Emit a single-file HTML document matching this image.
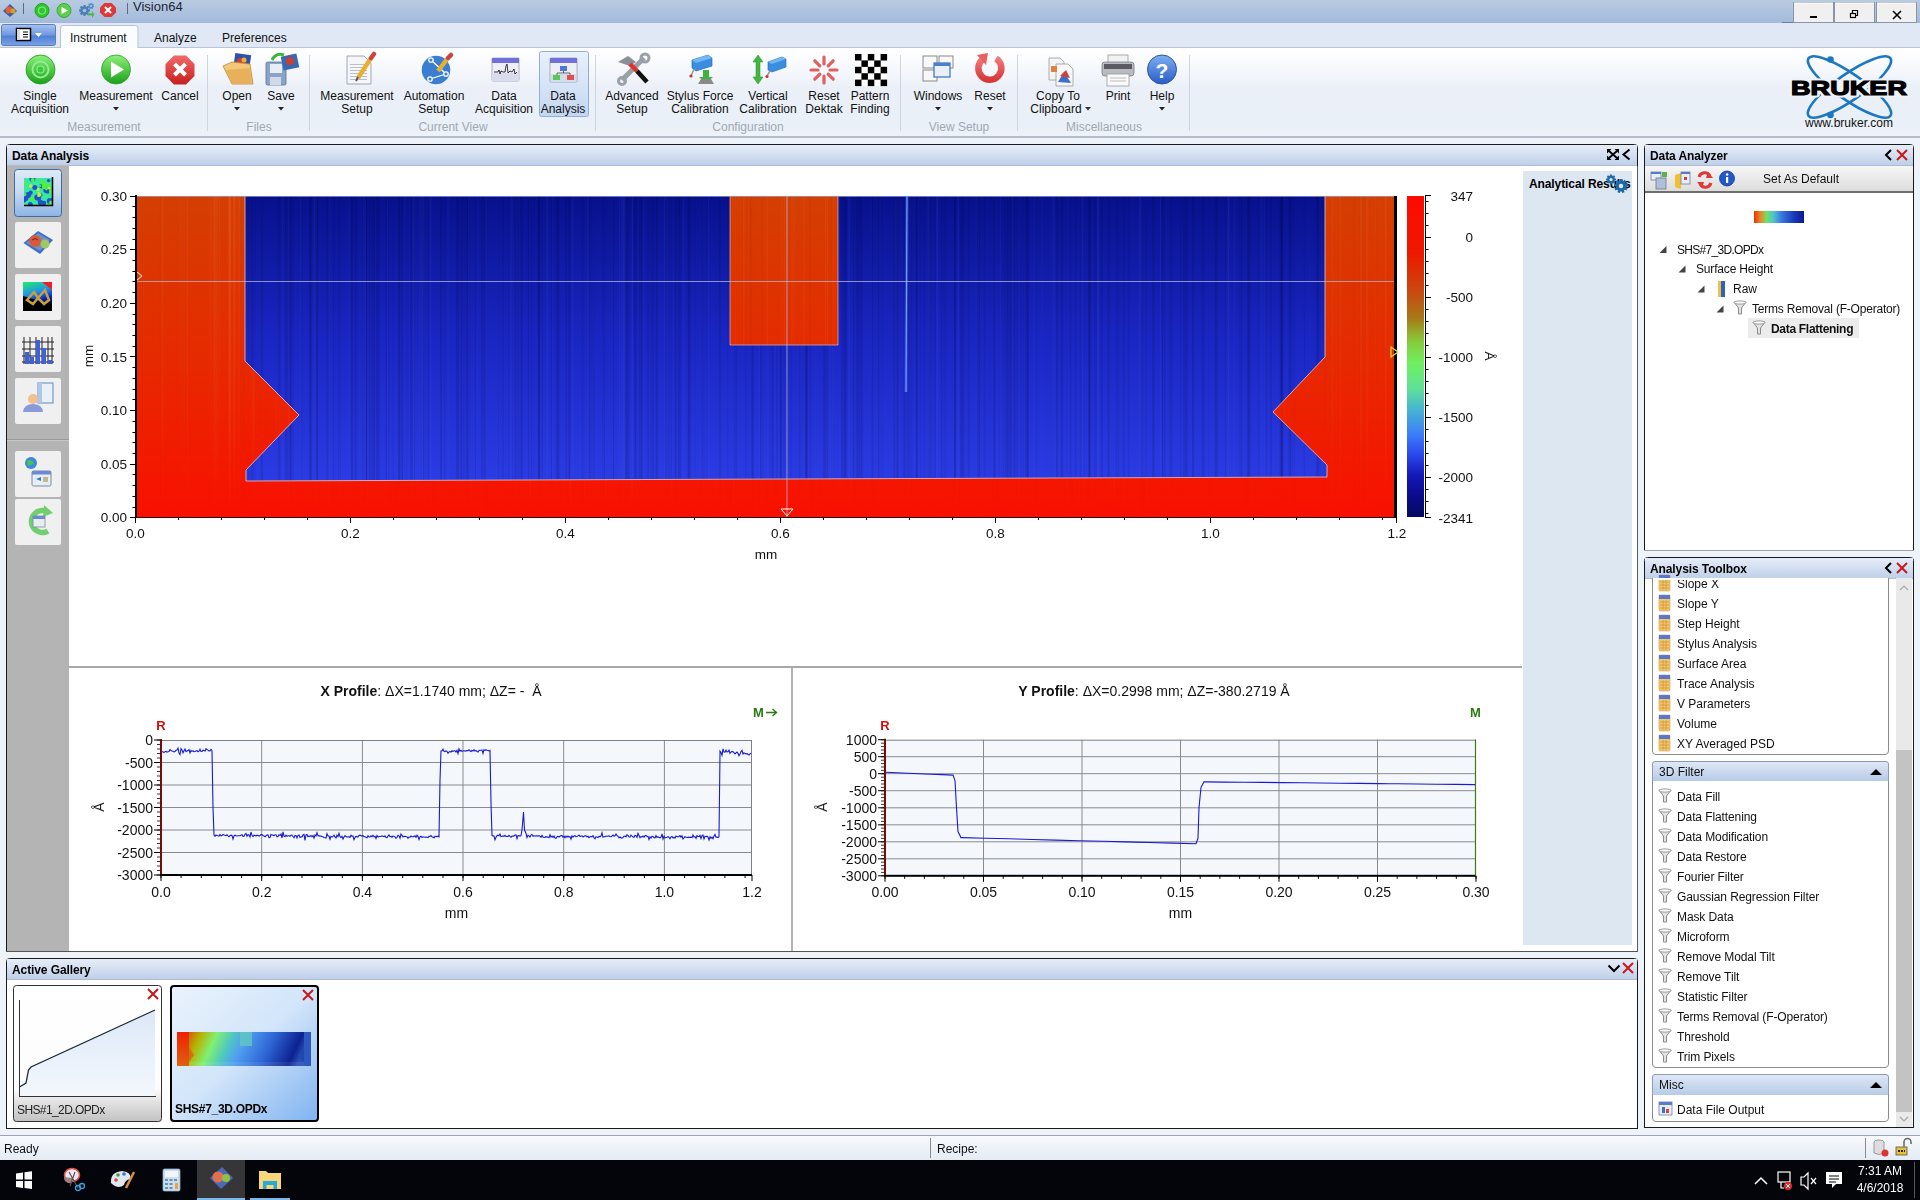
<!DOCTYPE html><html><head><meta charset="utf-8"><style>
*{margin:0;padding:0}html,body{width:1920px;height:1200px;overflow:hidden;background:#eef2f9}
svg{display:block;font-family:"Liberation Sans",sans-serif}
</style></head><body>
<svg width="1920" height="1200" viewBox="0 0 1920 1200">
<defs>
<linearGradient id="gTitle" x1="0" y1="0" x2="0" y2="1"><stop offset="0" stop-color="#b9cbe1"/><stop offset="1" stop-color="#a3badb"/></linearGradient>
<linearGradient id="gRibbon" x1="0" y1="0" x2="0" y2="1"><stop offset="0" stop-color="#ffffff"/><stop offset="0.12" stop-color="#fbfcfe"/><stop offset="0.45" stop-color="#ebf0f8"/><stop offset="0.85" stop-color="#eaf0f8"/><stop offset="1" stop-color="#eef2f9"/></linearGradient>
<linearGradient id="gHdr" x1="0" y1="0" x2="0" y2="1"><stop offset="0" stop-color="#e6edf8"/><stop offset="1" stop-color="#c0d0e9"/></linearGradient>
<linearGradient id="gAppBtn" x1="0" y1="0" x2="0" y2="1"><stop offset="0" stop-color="#a9c3ee"/><stop offset="0.5" stop-color="#6f98e0"/><stop offset="0.55" stop-color="#4f7fd6"/><stop offset="1" stop-color="#7aa3e6"/></linearGradient>
<linearGradient id="gWinBtn" x1="0" y1="0" x2="0" y2="1"><stop offset="0" stop-color="#f4f4f4"/><stop offset="1" stop-color="#e0e0e0"/></linearGradient>
<linearGradient id="gSel" x1="0" y1="0" x2="0" y2="1"><stop offset="0" stop-color="#e9f1fb"/><stop offset="1" stop-color="#c3d7f1"/></linearGradient>
<linearGradient id="gSideSel" x1="0" y1="0" x2="0" y2="1"><stop offset="0" stop-color="#dfe9f7"/><stop offset="0.5" stop-color="#c6d9f1"/><stop offset="1" stop-color="#8db4e5"/></linearGradient>
<linearGradient id="gRed" gradientUnits="userSpaceOnUse" x1="0" y1="196" x2="0" y2="517"><stop offset="0" stop-color="#d43f02"/><stop offset="0.5" stop-color="#e62a00"/><stop offset="1" stop-color="#f91000"/></linearGradient>
<linearGradient id="gBlue" gradientUnits="userSpaceOnUse" x1="0" y1="196" x2="0" y2="481"><stop offset="0" stop-color="#07118c"/><stop offset="0.5" stop-color="#1a26c2"/><stop offset="1" stop-color="#2b3ce4"/></linearGradient>
<linearGradient id="gCbar" x1="0" y1="0" x2="0" y2="1">
<stop offset="0" stop-color="#ff0a00"/><stop offset="0.18" stop-color="#ee1800"/><stop offset="0.3" stop-color="#c84a10"/><stop offset="0.38" stop-color="#a87818"/>
<stop offset="0.45" stop-color="#88c838"/><stop offset="0.52" stop-color="#70f060"/><stop offset="0.6" stop-color="#60e098"/><stop offset="0.66" stop-color="#48b8d0"/>
<stop offset="0.74" stop-color="#3c80f8"/><stop offset="0.8" stop-color="#2c4cf0"/><stop offset="0.87" stop-color="#1418b8"/><stop offset="0.94" stop-color="#0a0a88"/><stop offset="1" stop-color="#060a5e"/></linearGradient>
<linearGradient id="gTool" x1="0" y1="0" x2="0" y2="1"><stop offset="0" stop-color="#f6f6f6"/><stop offset="1" stop-color="#dcdcdc"/></linearGradient>
<linearGradient id="gCat" x1="0" y1="0" x2="0" y2="1"><stop offset="0" stop-color="#dfe8f6"/><stop offset="1" stop-color="#b7cbe8"/></linearGradient>
<linearGradient id="gStatus" x1="0" y1="0" x2="0" y2="1"><stop offset="0" stop-color="#f8fafd"/><stop offset="1" stop-color="#e4ebf4"/></linearGradient>
<linearGradient id="gThumb1" x1="0" y1="0" x2="0" y2="1"><stop offset="0" stop-color="#ffffff"/><stop offset="0.76" stop-color="#fcfcfc"/><stop offset="0.84" stop-color="#e6e6e6"/><stop offset="1" stop-color="#c2c2c2"/></linearGradient>
<linearGradient id="gThumb2" x1="0" y1="0" x2="1" y2="1"><stop offset="0" stop-color="#eaf3fd"/><stop offset="0.5" stop-color="#d2e5fa"/><stop offset="1" stop-color="#7fb3f0"/></linearGradient>
<linearGradient id="gGreen" x1="0" y1="0" x2="0" y2="1"><stop offset="0" stop-color="#8ef07a"/><stop offset="1" stop-color="#1aa01a"/></linearGradient>
<linearGradient id="gRedBtn" x1="0" y1="0" x2="0" y2="1"><stop offset="0" stop-color="#f26a6a"/><stop offset="1" stop-color="#c81e1e"/></linearGradient>
<linearGradient id="gBlueBall" x1="0" y1="0" x2="0" y2="1"><stop offset="0" stop-color="#7fb0f0"/><stop offset="1" stop-color="#2a5cc8"/></linearGradient>
</defs>

<rect x="0" y="0" width="1920" height="23" fill="url(#gTitle)" />
<g transform="translate(10,10)"><path d="M-7,1 L0,-6 L7,1 L0,7 Z" fill="#3a5aa0"/><circle cx="-1" cy="0" r="3.5" fill="#e06030"/><circle cx="3" cy="1" r="2.5" fill="#d0a020"/></g>
<line x1="23.5" y1="3" x2="23.5" y2="14" stroke="#5a6a80" stroke-width="1" />
<circle cx="42" cy="10.5" r="7" fill="#2ec82e" stroke="#20a020"/><circle cx="42" cy="10.5" r="3.5" fill="none" stroke="#7ee87e" stroke-width="1.2"/>
<circle cx="64" cy="10.5" r="7" fill="#5cd04a" stroke="#3aa83a"/><path d="M61.5,7 L68,10.5 L61.5,14Z" fill="#fff"/>
<circle cx="84.5" cy="10.5" r="4.29" fill="#4a80b8"/><rect x="83.40" y="5.00" width="2.20" height="2.75" fill="#4a80b8" transform="rotate(0.0 84.5 10.5)"/><rect x="83.40" y="5.00" width="2.20" height="2.75" fill="#4a80b8" transform="rotate(45.0 84.5 10.5)"/><rect x="83.40" y="5.00" width="2.20" height="2.75" fill="#4a80b8" transform="rotate(90.0 84.5 10.5)"/><rect x="83.40" y="5.00" width="2.20" height="2.75" fill="#4a80b8" transform="rotate(135.0 84.5 10.5)"/><rect x="83.40" y="5.00" width="2.20" height="2.75" fill="#4a80b8" transform="rotate(180.0 84.5 10.5)"/><rect x="83.40" y="5.00" width="2.20" height="2.75" fill="#4a80b8" transform="rotate(225.0 84.5 10.5)"/><rect x="83.40" y="5.00" width="2.20" height="2.75" fill="#4a80b8" transform="rotate(270.0 84.5 10.5)"/><rect x="83.40" y="5.00" width="2.20" height="2.75" fill="#4a80b8" transform="rotate(315.0 84.5 10.5)"/><circle cx="84.5" cy="10.5" r="1.82" fill="#a9bedb"/>
<circle cx="91" cy="6" r="2.50" fill="#5a90c8"/><rect x="90.36" y="2.80" width="1.28" height="1.60" fill="#5a90c8" transform="rotate(0.0 91 6)"/><rect x="90.36" y="2.80" width="1.28" height="1.60" fill="#5a90c8" transform="rotate(51.4 91 6)"/><rect x="90.36" y="2.80" width="1.28" height="1.60" fill="#5a90c8" transform="rotate(102.9 91 6)"/><rect x="90.36" y="2.80" width="1.28" height="1.60" fill="#5a90c8" transform="rotate(154.3 91 6)"/><rect x="90.36" y="2.80" width="1.28" height="1.60" fill="#5a90c8" transform="rotate(205.7 91 6)"/><rect x="90.36" y="2.80" width="1.28" height="1.60" fill="#5a90c8" transform="rotate(257.1 91 6)"/><rect x="90.36" y="2.80" width="1.28" height="1.60" fill="#5a90c8" transform="rotate(308.6 91 6)"/><circle cx="91" cy="6" r="1.06" fill="#a9bedb"/>
<path d="M88,13 L93,13 L93,10 L96,14.5 L93,19 L93,16 L88,16Z" fill="#50b850" transform="scale(0.8) translate(22,3.5)"/>
<path d="M104.5,3 L111.5,3 L116,7.5 L116,12.5 L111.5,17 L104.5,17 L100,12.5 L100,7.5Z" fill="#e03838"/><path d="M105,7 L111,13 M111,7 L105,13" stroke="#fff" stroke-width="2"/>
<line x1="127.5" y1="3" x2="127.5" y2="14" stroke="#5a6a80" stroke-width="1" />
<text x="133" y="11" font-size="13" fill="#1a2536" >Vision64</text>
<line x1="1782" y1="22.5" x2="1916" y2="22.5" stroke="#6f7f94" stroke-width="1" />
<rect x="1793.5" y="2.5" width="40" height="20" fill="#f0f0f0" stroke="#8a94a2"/>
<line x1="1794" y1="3" x2="1833" y2="3" stroke="#fff" stroke-width="1" />
<rect x="1834.5" y="2.5" width="40" height="20" fill="#f0f0f0" stroke="#8a94a2"/>
<line x1="1835" y1="3" x2="1874" y2="3" stroke="#fff" stroke-width="1" />
<rect x="1876.5" y="2.5" width="40" height="20" fill="#f0f0f0" stroke="#8a94a2"/>
<line x1="1877" y1="3" x2="1916" y2="3" stroke="#fff" stroke-width="1" />
<rect x="1810" y="16" width="7" height="2" fill="#000"/>
<g fill="none" stroke="#000" stroke-width="1.2"><rect x="1850.5" y="13.5" width="5" height="4"/><path d="M1852.5,13.5 V10.5 H1857.5 V15.5 H1855.5"/></g>
<path d="M1893,11 L1901,19 M1901,11 L1893,19" stroke="#000" stroke-width="1.6"/>
<rect x="0" y="23" width="1920" height="25" fill="#dfe8f4" />
<line x1="0" y1="47.5" x2="1920" y2="47.5" stroke="#bac6d6" stroke-width="1" />
<rect x="1.5" y="24.5" width="54" height="21" rx="2" fill="url(#gAppBtn)" stroke="#5d7fb8"/>
<rect x="16.5" y="28.5" width="14" height="12" fill="#fff" stroke="#000" stroke-width="1.5"/><rect x="17" y="29" width="3" height="11" fill="#d8d8d8"/><path d="M23,32 H28 M23,34.5 H28 M23,37 H28" stroke="#000" stroke-width="1"/>
<path d="M35,33 L42,33 L38.5,37Z" fill="#fff"/>
<path d="M60.5,48 V28 Q60.5,25.5 63,25.5 H135.5 Q138,25.5 138,28 V48" fill="#fafcfe" stroke="#b6c5d8"/>
<text x="70" y="42" font-size="12" fill="#111" >Instrument</text>
<text x="154" y="42" font-size="12" fill="#111" >Analyze</text>
<text x="222" y="42" font-size="12" fill="#111" >Preferences</text>
<rect x="0" y="48" width="1920" height="89" fill="url(#gRibbon)" />
<rect x="0" y="136" width="1920" height="2" fill="#b4bdca" />
<rect x="207.0" y="55" width="1" height="76" fill="#ccd5e0"/>
<rect x="309.0" y="55" width="1" height="76" fill="#ccd5e0"/>
<rect x="595.0" y="55" width="1" height="76" fill="#ccd5e0"/>
<rect x="900.0" y="55" width="1" height="76" fill="#ccd5e0"/>
<rect x="1017.0" y="55" width="1" height="76" fill="#ccd5e0"/>
<rect x="1189.0" y="55" width="1" height="76" fill="#ccd5e0"/>
<text x="104" y="131" font-size="12" fill="#a0a8b2" text-anchor="middle" >Measurement</text>
<text x="259" y="131" font-size="12" fill="#a0a8b2" text-anchor="middle" >Files</text>
<text x="453" y="131" font-size="12" fill="#a0a8b2" text-anchor="middle" >Current View</text>
<text x="748" y="131" font-size="12" fill="#a0a8b2" text-anchor="middle" >Configuration</text>
<text x="959" y="131" font-size="12" fill="#a0a8b2" text-anchor="middle" >View Setup</text>
<text x="1104" y="131" font-size="12" fill="#a0a8b2" text-anchor="middle" >Miscellaneous</text>
<rect x="539.5" y="51.5" width="49" height="65" rx="2" fill="url(#gSel)" stroke="#8fb0d8"/>
<text x="40" y="100" font-size="12" fill="#111" text-anchor="middle" >Single</text>
<text x="40" y="113" font-size="12" fill="#111" text-anchor="middle" >Acquisition</text>
<text x="116" y="100" font-size="12" fill="#111" text-anchor="middle" >Measurement</text>
<path d="M113,107 L119,107 L116,110.5Z" fill="#222"/>
<text x="180" y="100" font-size="12" fill="#111" text-anchor="middle" >Cancel</text>
<text x="237" y="100" font-size="12" fill="#111" text-anchor="middle" >Open</text>
<path d="M234,107 L240,107 L237,110.5Z" fill="#222"/>
<text x="281" y="100" font-size="12" fill="#111" text-anchor="middle" >Save</text>
<path d="M278,107 L284,107 L281,110.5Z" fill="#222"/>
<text x="357" y="100" font-size="12" fill="#111" text-anchor="middle" >Measurement</text>
<text x="357" y="113" font-size="12" fill="#111" text-anchor="middle" >Setup</text>
<text x="434" y="100" font-size="12" fill="#111" text-anchor="middle" >Automation</text>
<text x="434" y="113" font-size="12" fill="#111" text-anchor="middle" >Setup</text>
<text x="504" y="100" font-size="12" fill="#111" text-anchor="middle" >Data</text>
<text x="504" y="113" font-size="12" fill="#111" text-anchor="middle" >Acquisition</text>
<text x="563" y="100" font-size="12" fill="#111" text-anchor="middle" >Data</text>
<text x="563" y="113" font-size="12" fill="#111" text-anchor="middle" >Analysis</text>
<text x="632" y="100" font-size="12" fill="#111" text-anchor="middle" >Advanced</text>
<text x="632" y="113" font-size="12" fill="#111" text-anchor="middle" >Setup</text>
<text x="700" y="100" font-size="12" fill="#111" text-anchor="middle" >Stylus Force</text>
<text x="700" y="113" font-size="12" fill="#111" text-anchor="middle" >Calibration</text>
<text x="768" y="100" font-size="12" fill="#111" text-anchor="middle" >Vertical</text>
<text x="768" y="113" font-size="12" fill="#111" text-anchor="middle" >Calibration</text>
<text x="824" y="100" font-size="12" fill="#111" text-anchor="middle" >Reset</text>
<text x="824" y="113" font-size="12" fill="#111" text-anchor="middle" >Dektak</text>
<text x="870" y="100" font-size="12" fill="#111" text-anchor="middle" >Pattern</text>
<text x="870" y="113" font-size="12" fill="#111" text-anchor="middle" >Finding</text>
<text x="938" y="100" font-size="12" fill="#111" text-anchor="middle" >Windows</text>
<path d="M935,107 L941,107 L938,110.5Z" fill="#222"/>
<text x="990" y="100" font-size="12" fill="#111" text-anchor="middle" >Reset</text>
<path d="M987,107 L993,107 L990,110.5Z" fill="#222"/>
<text x="1058" y="100" font-size="12" fill="#111" text-anchor="middle" >Copy To</text>
<text x="1056" y="113" font-size="12" fill="#111" text-anchor="middle" >Clipboard</text>
<path d="M1085,107 L1091,107 L1088,110.5Z" fill="#333"/>
<text x="1118" y="100" font-size="12" fill="#111" text-anchor="middle" >Print</text>
<text x="1162" y="100" font-size="12" fill="#111" text-anchor="middle" >Help</text>
<path d="M1159,107 L1165,107 L1162,110.5Z" fill="#222"/>
<circle cx="40.5" cy="69.5" r="14.5" fill="url(#gGreen)" stroke="#1a9a1a" stroke-width="0.8"/><circle cx="40.5" cy="69.5" r="8" fill="none" stroke="#8ef08e" stroke-width="2"/><circle cx="40.5" cy="69.5" r="3.5" fill="#3cc83c" stroke="#8ef08e" stroke-width="1.2"/>
<circle cx="116" cy="69.5" r="14.5" fill="url(#gGreen)" stroke="#2aa02a" stroke-width="0.8"/><path d="M111,61.5 L124,69.5 L111,77.5Z" fill="#fff"/>
<path d="M174,55.5 L186,55.5 L194.5,64 L194.5,76 L186,84.5 L174,84.5 L165.5,76 L165.5,64Z" fill="url(#gRedBtn)"/><path d="M174.5,64 L185.5,75 M185.5,64 L174.5,75" stroke="#fff" stroke-width="4"/>
<rect x="234" y="54" width="16" height="18" fill="#3050a8" transform="rotate(8 242 63)"/><circle cx="241" cy="63" r="5" fill="#d04030"/><circle cx="244" cy="60" r="2.5" fill="#e8b040"/>
<path d="M223,66 L232,62 L250,64 L253,84 L232,84 Z" fill="#f2c878" stroke="#b88838" stroke-width="0.8"/><path d="M226,70 L250,68 L252,84 L232,84Z" fill="#e8b05a"/>
<rect x="266" y="62" width="20" height="23" rx="1.5" fill="#8aa4c8" stroke="#5a7498" stroke-width="0.8"/><rect x="270" y="64" width="12" height="9" fill="#e8eef6"/><rect x="270" y="77" width="11" height="8" fill="#d0dae8"/>
<rect x="282" y="55" width="16" height="14" fill="#3868b0" transform="rotate(-12 290 62)"/><circle cx="290" cy="61" r="4" fill="#c84030"/><path d="M272,60 Q276,52 284,55" fill="none" stroke="#38b838" stroke-width="3"/>
<path d="M347,56 L364,56 L371,63 L371,84 L347,84Z" fill="#f4f6fa" stroke="#8a96a8" stroke-width="0.8"/>
<line x1="350" y1="64.5" x2="367" y2="64.5" stroke="#b8c0cc" stroke-width="1" />
<line x1="350" y1="67.5" x2="367" y2="67.5" stroke="#b8c0cc" stroke-width="1" />
<line x1="350" y1="70.5" x2="367" y2="70.5" stroke="#b8c0cc" stroke-width="1" />
<line x1="350" y1="73.5" x2="367" y2="73.5" stroke="#b8c0cc" stroke-width="1" />
<line x1="350" y1="76.5" x2="367" y2="76.5" stroke="#b8c0cc" stroke-width="1" />
<line x1="350" y1="79.5" x2="367" y2="79.5" stroke="#b8c0cc" stroke-width="1" />
<path d="M358,78 L371,58" stroke="#e8b030" stroke-width="4.5"/><path d="M371,58 L374,54" stroke="#d04040" stroke-width="4.5" stroke-linecap="round"/><path d="M356,81 L358,77" stroke="#555" stroke-width="2"/>
<circle cx="436" cy="70" r="14.3" fill="#3b7dd0"/><path d="M0,0" /><g stroke="#fff" stroke-width="1.3" fill="#3b7dd0"><line x1="431" y1="60" x2="445" y2="73"/><line x1="430" y1="79" x2="446" y2="74"/><circle cx="431" cy="60" r="2.2"/><circle cx="446" cy="74" r="2.2"/><circle cx="430" cy="79" r="2.2"/></g>
<path d="M438,71 L448,58" stroke="#e8b030" stroke-width="4.5"/><path d="M448,58 L451,55" stroke="#d04040" stroke-width="4.5" stroke-linecap="round"/>
<rect x="492" y="58" width="27" height="23" rx="1" fill="#eeeff6" stroke="#9aa0b0" stroke-width="0.8"/><rect x="492" y="58" width="27" height="5" fill="#7070d8"/><rect x="492" y="73" width="27" height="8" fill="#d8dcec"/>
<path d="M494,72 L498,72 L499,70 L500,74 L501,71 L503,72 L505,72 L506,66 L507,64 L508,73 L510,71 L512,72 L514,69 L515,74 L517,72" fill="none" stroke="#222" stroke-width="0.9"/>
<rect x="550" y="58" width="27" height="24" rx="1" fill="#eeeff6" stroke="#9aa0b0" stroke-width="0.8"/><rect x="550" y="58" width="27" height="5" fill="#7070d8"/><rect x="551" y="74" width="25" height="8" fill="#d4dcec"/>
<rect x="560" y="66" width="7" height="5" fill="#4a78e0"/><path d="M563.5,71 V73 M557,73 H570 M557,73 V75 M570,73 V75" stroke="#444" stroke-width="0.8" fill="none"/><rect x="553" y="75" width="7" height="5" fill="#58c858"/><rect x="567" y="75" width="7" height="5" fill="#e05050"/>
<path d="M622,80 L644,58" stroke="#9aa0a8" stroke-width="5"/><circle cx="645" cy="58" r="4" fill="none" stroke="#9aa0a8" stroke-width="3"/><circle cx="622" cy="81" r="3.5" fill="none" stroke="#9aa0a8" stroke-width="3"/>
<path d="M618,62 L628,56 L636,62 L630,66Z" fill="#8a8e96"/><path d="M630,64 L637,71" stroke="#e03030" stroke-width="4.5"/><path d="M637,71 L647,82" stroke="#111" stroke-width="4.5"/>
<path d="M692,60 L708,55 L712,58 L712,66 L696,71 L692,68Z" fill="#3a8ee0" stroke="#2060a8" stroke-width="0.6"/><path d="M692,60 L708,55 L712,58 L696,63Z" fill="#70b8f8"/><path d="M694,69 L691,76" stroke="#999" stroke-width="1.5"/><circle cx="691" cy="76" r="1.6" fill="#d03030"/>
<path d="M703,70 L703,77 L699,77 L706,83 L713,77 L709,77 L709,70Z" fill="#40b040"/><path d="M698,84 L714,84 L711,79 L701,79Z" fill="#8a8a8a"/>
<path d="M758,55 L753,62 L756,62 L756,77 L753,77 L758,84 L763,77 L760,77 L760,62 L763,62Z" fill="#40b840" stroke="#2a8a2a" stroke-width="0.5"/>
<path d="M768,62 L782,57 L786,59 L786,67 L772,72 L768,70Z" fill="#3a8ee0" stroke="#2060a8" stroke-width="0.6"/><path d="M768,62 L782,57 L786,59 L772,64Z" fill="#70b8f8"/><path d="M770,71 L767,76" stroke="#999" stroke-width="1.5"/><circle cx="767" cy="76.5" r="1.6" fill="#d03030"/>
<line x1="830.0" y1="70.0" x2="837.0" y2="70.0" stroke="#e06060" stroke-width="3.2" stroke-linecap="round"/><line x1="828.2" y1="74.2" x2="833.2" y2="79.2" stroke="#e06060" stroke-width="3.2" stroke-linecap="round"/><line x1="824.0" y1="76.0" x2="824.0" y2="83.0" stroke="#e06060" stroke-width="3.2" stroke-linecap="round"/><line x1="819.8" y1="74.2" x2="814.8" y2="79.2" stroke="#e06060" stroke-width="3.2" stroke-linecap="round"/><line x1="818.0" y1="70.0" x2="811.0" y2="70.0" stroke="#e06060" stroke-width="3.2" stroke-linecap="round"/><line x1="819.8" y1="65.8" x2="814.8" y2="60.8" stroke="#e06060" stroke-width="3.2" stroke-linecap="round"/><line x1="824.0" y1="64.0" x2="824.0" y2="57.0" stroke="#e06060" stroke-width="3.2" stroke-linecap="round"/><line x1="828.2" y1="65.8" x2="833.2" y2="60.8" stroke="#e06060" stroke-width="3.2" stroke-linecap="round"/>
<rect x="855" y="54" width="32" height="32" fill="#fff"/>
<rect x="855.0" y="54.0" width="6.5" height="6.5" fill="#000" />
<rect x="867.8" y="54.0" width="6.5" height="6.5" fill="#000" />
<rect x="880.6" y="54.0" width="6.5" height="6.5" fill="#000" />
<rect x="861.4" y="60.4" width="6.5" height="6.5" fill="#000" />
<rect x="874.2" y="60.4" width="6.5" height="6.5" fill="#000" />
<rect x="855.0" y="66.8" width="6.5" height="6.5" fill="#000" />
<rect x="867.8" y="66.8" width="6.5" height="6.5" fill="#000" />
<rect x="880.6" y="66.8" width="6.5" height="6.5" fill="#000" />
<rect x="861.4" y="73.2" width="6.5" height="6.5" fill="#000" />
<rect x="874.2" y="73.2" width="6.5" height="6.5" fill="#000" />
<rect x="855.0" y="79.6" width="6.5" height="6.5" fill="#000" />
<rect x="867.8" y="79.6" width="6.5" height="6.5" fill="#000" />
<rect x="880.6" y="79.6" width="6.5" height="6.5" fill="#000" />
<rect x="923" y="56" width="14" height="12" fill="#f8f8f8" stroke="#8a8a8a"/><rect x="939" y="56" width="14" height="12" fill="#f8f8f8" stroke="#8a8a8a"/><rect x="923" y="70" width="14" height="11" fill="#f8f8f8" stroke="#8a8a8a"/><rect x="934" y="63" width="16" height="14" fill="#e8f0fa" stroke="#3a70c0" stroke-width="1.2"/><rect x="934" y="63" width="16" height="3" fill="#4a80d0"/>
<defs><linearGradient id="gRst" x1="0" y1="0" x2="0" y2="1"><stop offset="0" stop-color="#f07878"/><stop offset="1" stop-color="#d83838"/></linearGradient></defs><path d="M983,59 A11.5,11.5 0 1 0 996,58.5" fill="none" stroke="url(#gRst)" stroke-width="6.5"/><path d="M977,55 L988,53 L986,65Z" fill="#e86060"/>
<path d="M1049,58 L1060,58 L1064,62 L1064,80 L1049,80Z" fill="#f4f4f4" stroke="#999" stroke-width="0.8"/><path d="M1056,64 L1068,64 L1073,69 L1073,86 L1056,86Z" fill="#f8f8f8" stroke="#999" stroke-width="0.8"/><path d="M1058,82 L1064,72 L1071,83Z" fill="#3a70c8"/><path d="M1060,76 L1066,70 L1070,78Z" fill="#d04040"/><rect x="1051" y="66" width="6" height="6" fill="#e08040"/>
<rect x="1108" y="55" width="20" height="8" fill="#f2f2f2" stroke="#999" stroke-width="0.8"/><rect x="1102" y="62" width="32" height="14" rx="3" fill="#b8bcc2" stroke="#7a7e84" stroke-width="0.8"/><rect x="1104" y="64" width="28" height="5" fill="#585c62"/><rect x="1107" y="74" width="22" height="12" fill="#fafafa" stroke="#999" stroke-width="0.8"/><path d="M1110,78 H1126 M1110,81 H1126" stroke="#bbb"/>
<circle cx="1162" cy="69.5" r="14.5" fill="url(#gBlueBall)" stroke="#2a54a8"/><text x="1162" y="78" font-size="21" font-weight="bold" fill="#fff" text-anchor="middle">?</text>
<g fill="none" stroke="#1d78c1" stroke-width="2.6"><ellipse cx="1849.5" cy="87" rx="50" ry="13" transform="rotate(35 1849.5 87)"/><ellipse cx="1849.5" cy="87" rx="50" ry="13" transform="rotate(-35 1849.5 87)"/></g><circle cx="1830.5" cy="59.5" r="3.3" fill="#1d78c1"/><circle cx="1830.5" cy="115" r="3.3" fill="#1d78c1"/>
<text x="1849" y="95" font-size="20" fill="#eef3f9" font-weight="bold" text-anchor="middle" textLength="116" lengthAdjust="spacingAndGlyphs" stroke="#eef3f9" stroke-width="5" stroke-linejoin="round">BRUKER</text>
<text x="1849" y="95" font-size="20" fill="#000" font-weight="bold" text-anchor="middle" textLength="116" lengthAdjust="spacingAndGlyphs" stroke="#000" stroke-width="1.2">BRUKER</text>
<text x="1849" y="127" font-size="12" fill="#111" text-anchor="middle" >www.bruker.com</text>
<path d="M6.5,952 V147.5 Q6.5,144.5 9.5,144.5 H1634.5 Q1637.5,144.5 1637.5,147.5 V952" fill="#fff" stroke="#1a1a1a"/>
<rect x="7" y="145" width="1630" height="20" fill="url(#gHdr)" />
<line x1="7" y1="165.5" x2="1637" y2="165.5" stroke="#aebdd4" stroke-width="1" />
<text x="12" y="160" font-size="12" fill="#000" font-weight="bold" letter-spacing="-0.1">Data Analysis</text>
<line x1="6" y1="951.5" x2="1638" y2="951.5" stroke="#555" stroke-width="1" />
<rect x="1637" y="166" width="1" height="786" fill="#5a5a5a" />
<g stroke="#000" stroke-width="1.6" fill="none"><path d="M1609,151 L1617,158 M1617,151 L1609,158" stroke-width="1.8"/></g><g fill="#000"><path d="M1607,149 L1611.5,149 L1607,153.5Z"/><path d="M1619,149 L1614.5,149 L1619,153.5Z"/><path d="M1607,160 L1611.5,160 L1607,155.5Z"/><path d="M1619,160 L1614.5,160 L1619,155.5Z"/></g><g stroke="#000" stroke-width="2" fill="none"><path d="M1629.5,149.5 L1623.5,154.5 L1629.5,159.5" stroke-width="2"/></g>
<rect x="7" y="166" width="62" height="785" fill="#b4b4b4" />
<line x1="7" y1="439.5" x2="69" y2="439.5" stroke="#9a9a9a" stroke-width="1" />
<line x1="7" y1="440.5" x2="69" y2="440.5" stroke="#c8c8c8" stroke-width="1" />
<rect x="14.5" y="169.5" width="47" height="47" rx="3" fill="url(#gSideSel)" stroke="#3a6ea8"/>
<rect x="15" y="222" width="46" height="46" rx="2" fill="#f0f0f0"/>
<rect x="15" y="274" width="46" height="46" rx="2" fill="#f0f0f0"/>
<rect x="15" y="326" width="46" height="46" rx="2" fill="#f0f0f0"/>
<rect x="15" y="378" width="46" height="46" rx="2" fill="#f0f0f0"/>
<rect x="15" y="451" width="46" height="46" rx="2" fill="#f0f0f0"/>
<rect x="15" y="499" width="46" height="46" rx="2" fill="#f0f0f0"/>
<defs><clipPath id="cpTopo"><rect x="24" y="178" width="28" height="27"/></clipPath></defs>
<g clip-path="url(#cpTopo)"><rect x="24" y="178" width="28" height="27" fill="#38e8a0"/><circle cx="30.7" cy="192.7" r="2.1" fill="#1f50d0"/><circle cx="40.9" cy="194.9" r="1.6" fill="#1f50d0"/><circle cx="24.4" cy="200.6" r="1.9" fill="#1f50d0"/><circle cx="30.6" cy="204.9" r="2.3" fill="#1f50d0"/><circle cx="47.4" cy="190.9" r="2.6" fill="#1f50d0"/><circle cx="28.2" cy="195.1" r="3.0" fill="#1f50d0"/><circle cx="38.6" cy="198.0" r="2.6" fill="#1f50d0"/><circle cx="25.8" cy="198.5" r="2.5" fill="#1f50d0"/><circle cx="32.4" cy="178.8" r="3.0" fill="#1f50d0"/><circle cx="37.2" cy="197.4" r="3.0" fill="#1f50d0"/><circle cx="44.0" cy="202.9" r="2.2" fill="#1f50d0"/><circle cx="46.4" cy="190.0" r="3.1" fill="#1f50d0"/><circle cx="48.6" cy="180.6" r="1.7" fill="#1f50d0"/><circle cx="30.1" cy="204.1" r="2.2" fill="#1f50d0"/><circle cx="41.5" cy="186.1" r="2.4" fill="#1f50d0"/><circle cx="34.8" cy="187.5" r="2.5" fill="#1f50d0"/><circle cx="40.4" cy="202.4" r="2.7" fill="#1f50d0"/><circle cx="50.0" cy="201.1" r="3.2" fill="#1f50d0"/><circle cx="42.8" cy="182.4" r="2.3" fill="#50f040"/><circle cx="51.0" cy="202.4" r="1.9" fill="#50f040"/><circle cx="44.0" cy="183.7" r="2.3" fill="#50f040"/><circle cx="40.1" cy="185.7" r="1.3" fill="#50f040"/><circle cx="47.9" cy="204.7" r="1.3" fill="#50f040"/><circle cx="46.4" cy="189.1" r="1.4" fill="#50f040"/><circle cx="32.2" cy="198.8" r="2.3" fill="#50f040"/><circle cx="25.2" cy="194.6" r="1.3" fill="#50f040"/><circle cx="44.1" cy="186.9" r="2.3" fill="#50f040"/><circle cx="51.5" cy="191.6" r="2.5" fill="#50f040"/><circle cx="32.7" cy="180.1" r="2.0" fill="#50f040"/><circle cx="24.9" cy="183.3" r="1.7" fill="#50f040"/><circle cx="41.1" cy="182.2" r="1.3" fill="#50f040"/><circle cx="48.3" cy="186.5" r="2.4" fill="#50f040"/><circle cx="49.1" cy="188.2" r="1.4" fill="#d0e830"/><circle cx="38.6" cy="195.4" r="1.5" fill="#d0e830"/><circle cx="39.7" cy="194.7" r="1.8" fill="#d0e830"/><circle cx="38.2" cy="189.6" r="1.6" fill="#d0e830"/><circle cx="30.7" cy="186.1" r="1.8" fill="#d0e830"/><circle cx="38.6" cy="192.8" r="1.0" fill="#d0e830"/></g><path d="M52.5,177 V205.5 H24" stroke="#000" stroke-width="1.5" fill="none"/>
<path d="M23.5,243 L38,231 L53,240 L40,254Z" fill="#3a6ad0"/><path d="M26,243 L38,233 L50,240 L40,251Z" fill="#7090c0"/><circle cx="35" cy="241" r="6" fill="#d85a3a"/><circle cx="45" cy="244" r="4.5" fill="#a0c860"/><path d="M32,240 q3,-3 6,0" stroke="#802010" fill="none"/>
<defs><linearGradient id="gIco3" x1="0" y1="0" x2="0.3" y2="1"><stop offset="0" stop-color="#20f060"/><stop offset="0.45" stop-color="#2090f0"/><stop offset="0.75" stop-color="#1020a0"/><stop offset="1" stop-color="#000"/></linearGradient></defs>
<rect x="23" y="282" width="29" height="29" fill="url(#gIco3)"/><path d="M23,296 L23,311 L52,311 L52,305 Z" fill="#000"/><path d="M42,282 H52 V290Z" fill="#f02020"/><path d="M27,300 L34,292 L38,298 L45,290 L49,300 L44,304 L38,298 L33,304Z" fill="none" stroke="#c8a040" stroke-width="2.5"/>
<g stroke="#222" stroke-width="1"><path d="M24,337 V364 M30,337 V364 M36,337 V364 M42,337 V364 M48,337 V364 M52,337 V364 M22,342 H54 M22,349 H54 M22,356 H54 M22,362 H54"/></g><g fill="#4060d8"><rect x="25" y="352" width="4" height="12"/><rect x="30" y="357" width="4" height="7"/><rect x="36" y="340" width="4" height="24"/><rect x="42" y="348" width="4" height="16"/><rect x="48" y="360" width="4" height="4"/></g>
<rect x="38" y="383" width="15" height="20" fill="#e8f0f8" stroke="#5a8ac0"/><rect x="38" y="383" width="4" height="20" fill="#b0c8e8"/><circle cx="33" cy="399" r="5" fill="#f0c090"/><path d="M23,412 Q24,404 33,404 Q42,404 43,412Z" fill="#8a9ad8"/>
<circle cx="31" cy="463" r="6" fill="#3a8ae0"/><path d="M27,461 Q31,458 34,463 Q31,466 28,466Z" fill="#50c050"/><rect x="32" y="471" width="19" height="15" rx="1.5" fill="#e8edf4" stroke="#7a8aa0"/><rect x="32" y="471" width="19" height="3.5" fill="#6a8ad8"/><path d="M36,479 L41,477 L41,481Z" fill="#2a80c8"/><rect x="43" y="477" width="5" height="5" fill="#c0b890"/>
<path d="M48,512 A11,11 0 1 0 48,531" fill="none" stroke="#70d070" stroke-width="5.5"/><path d="M44,505 L53,513 L43,517Z" fill="#70d070"/><rect x="33" y="516" width="12" height="11" fill="#e8edf4" stroke="#7a8aa0" stroke-width="0.8"/><rect x="33" y="516" width="12" height="3" fill="#6a8ad8"/>
<rect x="137" y="196" width="1257" height="321" fill="url(#gRed)" />
<defs><clipPath id="cpBlue"><polygon points="245,196 1325,196 1325,357 1273,412 1327,465 1327,477 246,481 246,470 299,415 245,361"/></clipPath><linearGradient id="gFade" x1="0" y1="0" x2="0" y2="1"><stop offset="0" stop-color="#fff"/><stop offset="0.7" stop-color="#999"/><stop offset="1" stop-color="#000"/></linearGradient><mask id="mFade" maskUnits="userSpaceOnUse" x="137" y="196" width="1257" height="321"><rect x="137" y="196" width="1257" height="321" fill="url(#gFade)"/></mask></defs>
<g mask="url(#mFade)"><rect x="544.1" y="196" width="1" height="321" fill="#ff9060" opacity="0.11"/><rect x="228.1" y="196" width="2" height="321" fill="#ff9060" opacity="0.08"/><rect x="209.9" y="196" width="2" height="321" fill="#ff9060" opacity="0.05"/><rect x="682.1" y="196" width="1" height="321" fill="#ff9060" opacity="0.06"/><rect x="670.6" y="196" width="2" height="321" fill="#ff9060" opacity="0.14"/><rect x="929.7" y="196" width="2" height="321" fill="#ff9060" opacity="0.10"/><rect x="635.6" y="196" width="1" height="321" fill="#ff9060" opacity="0.10"/><rect x="304.4" y="196" width="1" height="321" fill="#ff9060" opacity="0.10"/><rect x="854.6" y="196" width="2" height="321" fill="#a02000" opacity="0.07"/><rect x="868.1" y="196" width="2" height="321" fill="#ff9060" opacity="0.08"/><rect x="825.5" y="196" width="1" height="321" fill="#a02000" opacity="0.06"/><rect x="395.9" y="196" width="2" height="321" fill="#a02000" opacity="0.09"/><rect x="531.9" y="196" width="2" height="321" fill="#ff9060" opacity="0.08"/><rect x="449.3" y="196" width="1" height="321" fill="#a02000" opacity="0.12"/><rect x="239.9" y="196" width="1" height="321" fill="#a02000" opacity="0.09"/><rect x="568.7" y="196" width="1" height="321" fill="#ff9060" opacity="0.10"/><rect x="229.0" y="196" width="2" height="321" fill="#ff9060" opacity="0.06"/><rect x="567.0" y="196" width="1" height="321" fill="#ff9060" opacity="0.05"/><rect x="976.9" y="196" width="2" height="321" fill="#a02000" opacity="0.12"/><rect x="1165.7" y="196" width="1" height="321" fill="#a02000" opacity="0.08"/><rect x="761.3" y="196" width="1" height="321" fill="#ff9060" opacity="0.13"/><rect x="1324.5" y="196" width="1" height="321" fill="#a02000" opacity="0.11"/><rect x="213.3" y="196" width="2" height="321" fill="#ff9060" opacity="0.11"/><rect x="1385.3" y="196" width="1" height="321" fill="#ff9060" opacity="0.11"/><rect x="1252.0" y="196" width="1" height="321" fill="#ff9060" opacity="0.13"/><rect x="583.8" y="196" width="2" height="321" fill="#ff9060" opacity="0.09"/><rect x="411.3" y="196" width="1" height="321" fill="#ff9060" opacity="0.12"/><rect x="637.2" y="196" width="1" height="321" fill="#ff9060" opacity="0.06"/><rect x="641.9" y="196" width="1" height="321" fill="#ff9060" opacity="0.12"/><rect x="1223.0" y="196" width="1" height="321" fill="#a02000" opacity="0.09"/><rect x="588.0" y="196" width="1" height="321" fill="#ff9060" opacity="0.06"/><rect x="358.5" y="196" width="1" height="321" fill="#a02000" opacity="0.07"/><rect x="746.6" y="196" width="2" height="321" fill="#ff9060" opacity="0.07"/><rect x="142.1" y="196" width="1" height="321" fill="#a02000" opacity="0.08"/><rect x="848.9" y="196" width="1" height="321" fill="#a02000" opacity="0.13"/><rect x="1331.4" y="196" width="2" height="321" fill="#a02000" opacity="0.12"/><rect x="711.0" y="196" width="2" height="321" fill="#a02000" opacity="0.09"/><rect x="638.5" y="196" width="1" height="321" fill="#ff9060" opacity="0.11"/><rect x="215.2" y="196" width="1" height="321" fill="#ff9060" opacity="0.09"/><rect x="275.2" y="196" width="2" height="321" fill="#ff9060" opacity="0.06"/><rect x="849.4" y="196" width="2" height="321" fill="#ff9060" opacity="0.14"/><rect x="908.5" y="196" width="1" height="321" fill="#ff9060" opacity="0.11"/><rect x="323.7" y="196" width="1" height="321" fill="#ff9060" opacity="0.10"/><rect x="733.0" y="196" width="1" height="321" fill="#ff9060" opacity="0.14"/><rect x="722.7" y="196" width="1" height="321" fill="#ff9060" opacity="0.06"/><rect x="265.4" y="196" width="1" height="321" fill="#a02000" opacity="0.07"/><rect x="1178.9" y="196" width="1" height="321" fill="#a02000" opacity="0.05"/><rect x="1332.4" y="196" width="2" height="321" fill="#ff9060" opacity="0.06"/><rect x="819.8" y="196" width="1" height="321" fill="#a02000" opacity="0.08"/><rect x="945.1" y="196" width="1" height="321" fill="#a02000" opacity="0.13"/><rect x="788.6" y="196" width="1" height="321" fill="#ff9060" opacity="0.12"/><rect x="806.5" y="196" width="2" height="321" fill="#ff9060" opacity="0.11"/><rect x="907.8" y="196" width="1" height="321" fill="#ff9060" opacity="0.12"/><rect x="1067.0" y="196" width="1" height="321" fill="#ff9060" opacity="0.10"/><rect x="583.9" y="196" width="1" height="321" fill="#ff9060" opacity="0.12"/><rect x="730.6" y="196" width="1" height="321" fill="#a02000" opacity="0.10"/><rect x="569.8" y="196" width="2" height="321" fill="#ff9060" opacity="0.14"/><rect x="595.3" y="196" width="1" height="321" fill="#ff9060" opacity="0.07"/><rect x="384.3" y="196" width="1" height="321" fill="#ff9060" opacity="0.11"/><rect x="1268.7" y="196" width="1" height="321" fill="#ff9060" opacity="0.13"/><rect x="569.4" y="196" width="2" height="321" fill="#ff9060" opacity="0.13"/><rect x="287.7" y="196" width="1" height="321" fill="#a02000" opacity="0.12"/><rect x="737.9" y="196" width="1" height="321" fill="#ff9060" opacity="0.12"/><rect x="555.0" y="196" width="2" height="321" fill="#ff9060" opacity="0.09"/><rect x="1071.4" y="196" width="1" height="321" fill="#a02000" opacity="0.06"/><rect x="1385.3" y="196" width="1" height="321" fill="#ff9060" opacity="0.10"/><rect x="721.9" y="196" width="2" height="321" fill="#ff9060" opacity="0.11"/><rect x="886.0" y="196" width="1" height="321" fill="#a02000" opacity="0.13"/><rect x="333.0" y="196" width="2" height="321" fill="#ff9060" opacity="0.05"/><rect x="1141.8" y="196" width="2" height="321" fill="#a02000" opacity="0.06"/><rect x="1079.1" y="196" width="1" height="321" fill="#ff9060" opacity="0.14"/><rect x="381.9" y="196" width="1" height="321" fill="#ff9060" opacity="0.07"/><rect x="505.3" y="196" width="1" height="321" fill="#a02000" opacity="0.08"/><rect x="821.3" y="196" width="1" height="321" fill="#ff9060" opacity="0.13"/><rect x="581.7" y="196" width="1" height="321" fill="#a02000" opacity="0.10"/><rect x="1273.7" y="196" width="1" height="321" fill="#a02000" opacity="0.06"/><rect x="327.9" y="196" width="2" height="321" fill="#ff9060" opacity="0.13"/><rect x="1113.1" y="196" width="2" height="321" fill="#ff9060" opacity="0.12"/><rect x="325.3" y="196" width="1" height="321" fill="#ff9060" opacity="0.11"/><rect x="288.3" y="196" width="1" height="321" fill="#ff9060" opacity="0.11"/><rect x="804.1" y="196" width="1" height="321" fill="#ff9060" opacity="0.13"/><rect x="208.4" y="196" width="1" height="321" fill="#ff9060" opacity="0.05"/><rect x="259.9" y="196" width="1" height="321" fill="#a02000" opacity="0.05"/><rect x="1260.8" y="196" width="1" height="321" fill="#ff9060" opacity="0.08"/><rect x="1360.5" y="196" width="2" height="321" fill="#a02000" opacity="0.07"/><rect x="485.4" y="196" width="2" height="321" fill="#a02000" opacity="0.12"/><rect x="775.2" y="196" width="1" height="321" fill="#a02000" opacity="0.10"/><rect x="1238.1" y="196" width="1" height="321" fill="#a02000" opacity="0.13"/><rect x="391.7" y="196" width="1" height="321" fill="#ff9060" opacity="0.09"/><rect x="630.2" y="196" width="1" height="321" fill="#ff9060" opacity="0.11"/><rect x="675.4" y="196" width="1" height="321" fill="#a02000" opacity="0.08"/><rect x="290.8" y="196" width="1" height="321" fill="#a02000" opacity="0.11"/><rect x="597.3" y="196" width="1" height="321" fill="#ff9060" opacity="0.14"/><rect x="413.0" y="196" width="1" height="321" fill="#ff9060" opacity="0.13"/><rect x="341.6" y="196" width="2" height="321" fill="#ff9060" opacity="0.06"/><rect x="679.4" y="196" width="2" height="321" fill="#ff9060" opacity="0.08"/><rect x="383.1" y="196" width="1" height="321" fill="#ff9060" opacity="0.11"/><rect x="161.5" y="196" width="2" height="321" fill="#ff9060" opacity="0.09"/><rect x="159.7" y="196" width="1" height="321" fill="#a02000" opacity="0.11"/><rect x="780.9" y="196" width="1" height="321" fill="#ff9060" opacity="0.14"/><rect x="1128.0" y="196" width="1" height="321" fill="#ff9060" opacity="0.07"/><rect x="186.8" y="196" width="1" height="321" fill="#ff9060" opacity="0.12"/><rect x="1167.5" y="196" width="2" height="321" fill="#ff9060" opacity="0.09"/><rect x="811.5" y="196" width="2" height="321" fill="#a02000" opacity="0.09"/><rect x="548.1" y="196" width="1" height="321" fill="#ff9060" opacity="0.12"/><rect x="367.5" y="196" width="1" height="321" fill="#ff9060" opacity="0.13"/><rect x="934.5" y="196" width="1" height="321" fill="#ff9060" opacity="0.10"/><rect x="416.6" y="196" width="1" height="321" fill="#ff9060" opacity="0.09"/><rect x="563.3" y="196" width="2" height="321" fill="#ff9060" opacity="0.13"/><rect x="473.7" y="196" width="1" height="321" fill="#ff9060" opacity="0.10"/><rect x="436.7" y="196" width="1" height="321" fill="#ff9060" opacity="0.07"/><rect x="364.7" y="196" width="1" height="321" fill="#a02000" opacity="0.08"/><rect x="1091.7" y="196" width="1" height="321" fill="#ff9060" opacity="0.10"/><rect x="360.6" y="196" width="1" height="321" fill="#ff9060" opacity="0.14"/><rect x="183.4" y="196" width="1" height="321" fill="#a02000" opacity="0.10"/><rect x="1366.4" y="196" width="2" height="321" fill="#ff9060" opacity="0.07"/><rect x="698.9" y="196" width="2" height="321" fill="#a02000" opacity="0.09"/><rect x="759.2" y="196" width="1" height="321" fill="#a02000" opacity="0.08"/><rect x="407.5" y="196" width="1" height="321" fill="#ff9060" opacity="0.07"/><rect x="1245.6" y="196" width="2" height="321" fill="#a02000" opacity="0.06"/><rect x="1380.7" y="196" width="1" height="321" fill="#ff9060" opacity="0.05"/><rect x="923.2" y="196" width="1" height="321" fill="#ff9060" opacity="0.06"/><rect x="243.2" y="196" width="1" height="321" fill="#a02000" opacity="0.11"/><rect x="491.4" y="196" width="1" height="321" fill="#a02000" opacity="0.08"/><rect x="714.5" y="196" width="1" height="321" fill="#ff9060" opacity="0.09"/><rect x="467.9" y="196" width="1" height="321" fill="#a02000" opacity="0.08"/><rect x="180.3" y="196" width="1" height="321" fill="#ff9060" opacity="0.08"/><rect x="138.3" y="196" width="1" height="321" fill="#ff9060" opacity="0.09"/><rect x="769.0" y="196" width="1" height="321" fill="#ff9060" opacity="0.10"/><rect x="143.2" y="196" width="1" height="321" fill="#ff9060" opacity="0.06"/><rect x="874.6" y="196" width="1" height="321" fill="#ff9060" opacity="0.08"/><rect x="928.5" y="196" width="1" height="321" fill="#a02000" opacity="0.14"/><rect x="1209.5" y="196" width="1" height="321" fill="#a02000" opacity="0.13"/><rect x="1122.5" y="196" width="2" height="321" fill="#ff9060" opacity="0.12"/><rect x="1042.9" y="196" width="1" height="321" fill="#ff9060" opacity="0.08"/><rect x="914.7" y="196" width="1" height="321" fill="#ff9060" opacity="0.12"/><rect x="1035.8" y="196" width="2" height="321" fill="#a02000" opacity="0.09"/><rect x="1018.2" y="196" width="2" height="321" fill="#ff9060" opacity="0.13"/><rect x="1083.4" y="196" width="2" height="321" fill="#ff9060" opacity="0.12"/><rect x="871.2" y="196" width="2" height="321" fill="#a02000" opacity="0.14"/><rect x="945.1" y="196" width="1" height="321" fill="#ff9060" opacity="0.05"/><rect x="937.9" y="196" width="1" height="321" fill="#ff9060" opacity="0.13"/><rect x="839.1" y="196" width="2" height="321" fill="#ff9060" opacity="0.11"/><rect x="992.6" y="196" width="1" height="321" fill="#ff9060" opacity="0.05"/><rect x="1139.7" y="196" width="2" height="321" fill="#a02000" opacity="0.13"/><rect x="252.6" y="196" width="2" height="321" fill="#ff9060" opacity="0.12"/><rect x="732.6" y="196" width="1" height="321" fill="#ff9060" opacity="0.07"/><rect x="1087.8" y="196" width="1" height="321" fill="#a02000" opacity="0.11"/><rect x="715.6" y="196" width="1" height="321" fill="#ff9060" opacity="0.09"/><rect x="996.4" y="196" width="1" height="321" fill="#a02000" opacity="0.11"/><rect x="386.3" y="196" width="2" height="321" fill="#ff9060" opacity="0.08"/><rect x="956.0" y="196" width="2" height="321" fill="#ff9060" opacity="0.11"/><rect x="304.7" y="196" width="1" height="321" fill="#ff9060" opacity="0.09"/><rect x="1359.4" y="196" width="1" height="321" fill="#a02000" opacity="0.07"/><rect x="752.4" y="196" width="2" height="321" fill="#a02000" opacity="0.08"/><rect x="722.6" y="196" width="1" height="321" fill="#a02000" opacity="0.07"/><rect x="1366.5" y="196" width="1" height="321" fill="#ff9060" opacity="0.08"/><rect x="233.1" y="196" width="2" height="321" fill="#ff9060" opacity="0.14"/><rect x="623.3" y="196" width="1" height="321" fill="#ff9060" opacity="0.10"/><rect x="315.2" y="196" width="2" height="321" fill="#ff9060" opacity="0.14"/><rect x="303.7" y="196" width="2" height="321" fill="#a02000" opacity="0.08"/><rect x="278.6" y="196" width="1" height="321" fill="#ff9060" opacity="0.09"/><rect x="1238.3" y="196" width="1" height="321" fill="#ff9060" opacity="0.06"/><rect x="1331.1" y="196" width="2" height="321" fill="#ff9060" opacity="0.09"/><rect x="1051.1" y="196" width="1" height="321" fill="#ff9060" opacity="0.08"/><rect x="289.0" y="196" width="1" height="321" fill="#ff9060" opacity="0.08"/><rect x="562.2" y="196" width="1" height="321" fill="#ff9060" opacity="0.13"/><rect x="383.0" y="196" width="1" height="321" fill="#a02000" opacity="0.08"/><rect x="604.9" y="196" width="1" height="321" fill="#ff9060" opacity="0.14"/><rect x="877.6" y="196" width="1" height="321" fill="#ff9060" opacity="0.12"/><rect x="1210.8" y="196" width="1" height="321" fill="#ff9060" opacity="0.05"/><rect x="969.1" y="196" width="2" height="321" fill="#ff9060" opacity="0.07"/><rect x="471.0" y="196" width="2" height="321" fill="#ff9060" opacity="0.07"/><rect x="606.3" y="196" width="1" height="321" fill="#ff9060" opacity="0.12"/><rect x="930.0" y="196" width="2" height="321" fill="#a02000" opacity="0.07"/><rect x="238.3" y="196" width="2" height="321" fill="#ff9060" opacity="0.09"/><rect x="1083.1" y="196" width="2" height="321" fill="#ff9060" opacity="0.09"/><rect x="1283.3" y="196" width="2" height="321" fill="#ff9060" opacity="0.07"/><rect x="658.5" y="196" width="1" height="321" fill="#ff9060" opacity="0.07"/><rect x="1065.6" y="196" width="2" height="321" fill="#ff9060" opacity="0.09"/><rect x="437.0" y="196" width="1" height="321" fill="#a02000" opacity="0.11"/><rect x="287.5" y="196" width="2" height="321" fill="#ff9060" opacity="0.06"/><rect x="766.3" y="196" width="1" height="321" fill="#a02000" opacity="0.07"/><rect x="1276.2" y="196" width="1" height="321" fill="#ff9060" opacity="0.06"/><rect x="378.9" y="196" width="1" height="321" fill="#ff9060" opacity="0.08"/><rect x="251.5" y="196" width="1" height="321" fill="#ff9060" opacity="0.07"/><rect x="853.0" y="196" width="1" height="321" fill="#a02000" opacity="0.13"/><rect x="618.2" y="196" width="2" height="321" fill="#a02000" opacity="0.07"/><rect x="476.7" y="196" width="1" height="321" fill="#ff9060" opacity="0.07"/><rect x="1353.4" y="196" width="1" height="321" fill="#a02000" opacity="0.10"/><rect x="928.4" y="196" width="1" height="321" fill="#ff9060" opacity="0.07"/><rect x="449.3" y="196" width="1" height="321" fill="#a02000" opacity="0.09"/><rect x="1336.1" y="196" width="1" height="321" fill="#ff9060" opacity="0.05"/><rect x="1028.9" y="196" width="1" height="321" fill="#a02000" opacity="0.09"/><rect x="228.9" y="196" width="2" height="321" fill="#ff9060" opacity="0.14"/><rect x="449.3" y="196" width="1" height="321" fill="#ff9060" opacity="0.06"/><rect x="793.6" y="196" width="2" height="321" fill="#ff9060" opacity="0.13"/><rect x="1044.2" y="196" width="2" height="321" fill="#ff9060" opacity="0.06"/><rect x="1113.5" y="196" width="1" height="321" fill="#ff9060" opacity="0.07"/><rect x="1293.3" y="196" width="2" height="321" fill="#a02000" opacity="0.08"/><rect x="297.9" y="196" width="1" height="321" fill="#a02000" opacity="0.11"/><rect x="1015.1" y="196" width="1" height="321" fill="#ff9060" opacity="0.06"/><rect x="796.2" y="196" width="2" height="321" fill="#ff9060" opacity="0.08"/><rect x="418.0" y="196" width="2" height="321" fill="#ff9060" opacity="0.05"/><rect x="516.0" y="196" width="1" height="321" fill="#ff9060" opacity="0.14"/><rect x="947.2" y="196" width="1" height="321" fill="#ff9060" opacity="0.10"/><rect x="824.6" y="196" width="1" height="321" fill="#ff9060" opacity="0.11"/><rect x="523.4" y="196" width="1" height="321" fill="#ff9060" opacity="0.09"/><rect x="984.8" y="196" width="1" height="321" fill="#ff9060" opacity="0.07"/><rect x="975.9" y="196" width="1" height="321" fill="#ff9060" opacity="0.09"/><rect x="1011.6" y="196" width="2" height="321" fill="#ff9060" opacity="0.08"/><rect x="635.2" y="196" width="1" height="321" fill="#ff9060" opacity="0.12"/><rect x="771.6" y="196" width="1" height="321" fill="#ff9060" opacity="0.14"/><rect x="528.8" y="196" width="1" height="321" fill="#ff9060" opacity="0.09"/><rect x="470.1" y="196" width="1" height="321" fill="#ff9060" opacity="0.14"/><rect x="760.2" y="196" width="1" height="321" fill="#ff9060" opacity="0.09"/><rect x="1281.4" y="196" width="1" height="321" fill="#a02000" opacity="0.06"/><rect x="631.6" y="196" width="1" height="321" fill="#ff9060" opacity="0.14"/><rect x="315.4" y="196" width="1" height="321" fill="#a02000" opacity="0.06"/><rect x="631.4" y="196" width="2" height="321" fill="#ff9060" opacity="0.12"/><rect x="1390.9" y="196" width="1" height="321" fill="#ff9060" opacity="0.07"/><rect x="957.2" y="196" width="2" height="321" fill="#a02000" opacity="0.09"/><rect x="529.0" y="196" width="2" height="321" fill="#ff9060" opacity="0.13"/><rect x="1375.1" y="196" width="1" height="321" fill="#ff9060" opacity="0.06"/><rect x="235.4" y="196" width="1" height="321" fill="#ff9060" opacity="0.09"/><rect x="1249.7" y="196" width="2" height="321" fill="#ff9060" opacity="0.08"/><rect x="1103.3" y="196" width="1" height="321" fill="#ff9060" opacity="0.06"/><rect x="1023.5" y="196" width="1" height="321" fill="#ff9060" opacity="0.10"/><rect x="698.1" y="196" width="1" height="321" fill="#ff9060" opacity="0.12"/><rect x="733.5" y="196" width="2" height="321" fill="#ff9060" opacity="0.07"/><rect x="923.1" y="196" width="1" height="321" fill="#ff9060" opacity="0.08"/><rect x="720.3" y="196" width="1" height="321" fill="#ff9060" opacity="0.07"/><rect x="216.0" y="196" width="2" height="321" fill="#ff9060" opacity="0.08"/><rect x="558.1" y="196" width="2" height="321" fill="#ff9060" opacity="0.07"/><rect x="1037.8" y="196" width="1" height="321" fill="#ff9060" opacity="0.08"/><rect x="1044.0" y="196" width="2" height="321" fill="#a02000" opacity="0.14"/><rect x="219.1" y="196" width="1" height="321" fill="#ff9060" opacity="0.09"/><rect x="1339.7" y="196" width="1" height="321" fill="#ff9060" opacity="0.13"/><rect x="1161.2" y="196" width="1" height="321" fill="#ff9060" opacity="0.07"/><rect x="1145.8" y="196" width="2" height="321" fill="#ff9060" opacity="0.12"/><rect x="1108.4" y="196" width="2" height="321" fill="#ff9060" opacity="0.08"/><rect x="538.7" y="196" width="1" height="321" fill="#a02000" opacity="0.06"/><rect x="385.0" y="196" width="1" height="321" fill="#ff9060" opacity="0.09"/><rect x="953.5" y="196" width="1" height="321" fill="#a02000" opacity="0.10"/><rect x="339.0" y="196" width="1" height="321" fill="#ff9060" opacity="0.14"/><rect x="470.0" y="196" width="1" height="321" fill="#ff9060" opacity="0.06"/><rect x="763.6" y="196" width="2" height="321" fill="#ff9060" opacity="0.07"/><rect x="304.1" y="196" width="1" height="321" fill="#a02000" opacity="0.13"/><rect x="432.3" y="196" width="2" height="321" fill="#a02000" opacity="0.12"/><rect x="1117.1" y="196" width="1" height="321" fill="#ff9060" opacity="0.08"/><rect x="473.5" y="196" width="1" height="321" fill="#a02000" opacity="0.07"/><rect x="689.3" y="196" width="1" height="321" fill="#ff9060" opacity="0.07"/><rect x="490.7" y="196" width="2" height="321" fill="#ff9060" opacity="0.08"/><rect x="634.9" y="196" width="1" height="321" fill="#a02000" opacity="0.10"/><rect x="953.6" y="196" width="1" height="321" fill="#a02000" opacity="0.09"/><rect x="183.5" y="196" width="1" height="321" fill="#ff9060" opacity="0.13"/><rect x="427.5" y="196" width="1" height="321" fill="#ff9060" opacity="0.05"/><rect x="506.2" y="196" width="1" height="321" fill="#ff9060" opacity="0.07"/><rect x="1360.0" y="196" width="2" height="321" fill="#ff9060" opacity="0.13"/><rect x="604.9" y="196" width="1" height="321" fill="#ff9060" opacity="0.10"/></g>
<polygon points="245,196 1325,196 1325,357 1273,412 1327,465 1327,477 246,481 246,470 299,415 245,361" fill="url(#gBlue)"/>
<g clip-path="url(#cpBlue)"><rect x="1083.5" y="196" width="1" height="321" fill="#000030" opacity="0.12"/><rect x="1012.9" y="196" width="1" height="321" fill="#000030" opacity="0.05"/><rect x="612.9" y="196" width="1" height="321" fill="#000030" opacity="0.16"/><rect x="286.4" y="196" width="1" height="321" fill="#000030" opacity="0.14"/><rect x="687.5" y="196" width="1" height="321" fill="#000030" opacity="0.12"/><rect x="329.3" y="196" width="1" height="321" fill="#6070ff" opacity="0.07"/><rect x="313.5" y="196" width="1" height="321" fill="#6070ff" opacity="0.08"/><rect x="412.2" y="196" width="1" height="321" fill="#000030" opacity="0.09"/><rect x="538.4" y="196" width="1" height="321" fill="#000030" opacity="0.10"/><rect x="300.6" y="196" width="1" height="321" fill="#6070ff" opacity="0.06"/><rect x="1180.1" y="196" width="1" height="321" fill="#000030" opacity="0.09"/><rect x="683.2" y="196" width="1" height="321" fill="#6070ff" opacity="0.09"/><rect x="703.5" y="196" width="1" height="321" fill="#6070ff" opacity="0.07"/><rect x="639.6" y="196" width="1" height="321" fill="#000030" opacity="0.05"/><rect x="841.8" y="196" width="2" height="321" fill="#000030" opacity="0.11"/><rect x="1248.3" y="196" width="1" height="321" fill="#000030" opacity="0.09"/><rect x="420.1" y="196" width="1" height="321" fill="#000030" opacity="0.06"/><rect x="775.7" y="196" width="1" height="321" fill="#000030" opacity="0.06"/><rect x="1265.4" y="196" width="2" height="321" fill="#000030" opacity="0.06"/><rect x="1247.1" y="196" width="2" height="321" fill="#000030" opacity="0.15"/><rect x="916.2" y="196" width="1" height="321" fill="#000030" opacity="0.12"/><rect x="910.1" y="196" width="1" height="321" fill="#6070ff" opacity="0.05"/><rect x="481.0" y="196" width="2" height="321" fill="#000030" opacity="0.09"/><rect x="378.1" y="196" width="1" height="321" fill="#000030" opacity="0.05"/><rect x="853.5" y="196" width="1" height="321" fill="#000030" opacity="0.06"/><rect x="893.7" y="196" width="1" height="321" fill="#6070ff" opacity="0.06"/><rect x="514.7" y="196" width="2" height="321" fill="#000030" opacity="0.10"/><rect x="719.3" y="196" width="1" height="321" fill="#000030" opacity="0.12"/><rect x="774.6" y="196" width="1" height="321" fill="#6070ff" opacity="0.09"/><rect x="1088.9" y="196" width="2" height="321" fill="#000030" opacity="0.14"/><rect x="678.2" y="196" width="1" height="321" fill="#000030" opacity="0.09"/><rect x="640.3" y="196" width="2" height="321" fill="#000030" opacity="0.05"/><rect x="386.0" y="196" width="1" height="321" fill="#000030" opacity="0.06"/><rect x="790.2" y="196" width="2" height="321" fill="#000030" opacity="0.05"/><rect x="316.8" y="196" width="1" height="321" fill="#000030" opacity="0.06"/><rect x="1203.3" y="196" width="1" height="321" fill="#000030" opacity="0.13"/><rect x="1025.2" y="196" width="1" height="321" fill="#000030" opacity="0.14"/><rect x="905.5" y="196" width="1" height="321" fill="#000030" opacity="0.09"/><rect x="908.8" y="196" width="2" height="321" fill="#000030" opacity="0.08"/><rect x="1288.4" y="196" width="2" height="321" fill="#000030" opacity="0.12"/><rect x="911.4" y="196" width="1" height="321" fill="#000030" opacity="0.09"/><rect x="460.3" y="196" width="2" height="321" fill="#000030" opacity="0.12"/><rect x="546.0" y="196" width="1" height="321" fill="#6070ff" opacity="0.05"/><rect x="1094.2" y="196" width="1" height="321" fill="#000030" opacity="0.12"/><rect x="634.3" y="196" width="2" height="321" fill="#000030" opacity="0.08"/><rect x="824.6" y="196" width="2" height="321" fill="#000030" opacity="0.08"/><rect x="1316.7" y="196" width="1" height="321" fill="#000030" opacity="0.09"/><rect x="333.1" y="196" width="1" height="321" fill="#000030" opacity="0.12"/><rect x="1281.5" y="196" width="1" height="321" fill="#000030" opacity="0.08"/><rect x="1290.2" y="196" width="1" height="321" fill="#000030" opacity="0.13"/><rect x="484.8" y="196" width="1" height="321" fill="#6070ff" opacity="0.07"/><rect x="639.0" y="196" width="1" height="321" fill="#000030" opacity="0.10"/><rect x="907.7" y="196" width="1" height="321" fill="#000030" opacity="0.06"/><rect x="858.6" y="196" width="1" height="321" fill="#000030" opacity="0.11"/><rect x="822.9" y="196" width="2" height="321" fill="#000030" opacity="0.11"/><rect x="465.9" y="196" width="2" height="321" fill="#000030" opacity="0.06"/><rect x="1258.4" y="196" width="1" height="321" fill="#000030" opacity="0.10"/><rect x="313.9" y="196" width="1" height="321" fill="#000030" opacity="0.09"/><rect x="530.9" y="196" width="1" height="321" fill="#000030" opacity="0.12"/><rect x="853.4" y="196" width="1" height="321" fill="#6070ff" opacity="0.08"/><rect x="805.0" y="196" width="2" height="321" fill="#000030" opacity="0.07"/><rect x="245.4" y="196" width="1" height="321" fill="#000030" opacity="0.09"/><rect x="502.2" y="196" width="1" height="321" fill="#000030" opacity="0.05"/><rect x="841.1" y="196" width="1" height="321" fill="#000030" opacity="0.10"/><rect x="805.8" y="196" width="2" height="321" fill="#000030" opacity="0.11"/><rect x="314.0" y="196" width="1" height="321" fill="#6070ff" opacity="0.08"/><rect x="251.9" y="196" width="2" height="321" fill="#6070ff" opacity="0.04"/><rect x="954.3" y="196" width="1" height="321" fill="#000030" opacity="0.16"/><rect x="527.9" y="196" width="1" height="321" fill="#000030" opacity="0.09"/><rect x="1056.1" y="196" width="1" height="321" fill="#000030" opacity="0.08"/><rect x="844.2" y="196" width="2" height="321" fill="#000030" opacity="0.08"/><rect x="1249.7" y="196" width="1" height="321" fill="#000030" opacity="0.15"/><rect x="261.5" y="196" width="1" height="321" fill="#000030" opacity="0.14"/><rect x="464.4" y="196" width="1" height="321" fill="#000030" opacity="0.07"/><rect x="665.6" y="196" width="1" height="321" fill="#6070ff" opacity="0.09"/><rect x="927.4" y="196" width="2" height="321" fill="#6070ff" opacity="0.09"/><rect x="999.8" y="196" width="1" height="321" fill="#6070ff" opacity="0.10"/><rect x="498.0" y="196" width="1" height="321" fill="#000030" opacity="0.09"/><rect x="878.3" y="196" width="1" height="321" fill="#000030" opacity="0.05"/><rect x="366.1" y="196" width="1" height="321" fill="#000030" opacity="0.16"/><rect x="1003.2" y="196" width="1" height="321" fill="#000030" opacity="0.07"/><rect x="941.3" y="196" width="1" height="321" fill="#000030" opacity="0.13"/><rect x="316.2" y="196" width="1" height="321" fill="#000030" opacity="0.14"/><rect x="1131.8" y="196" width="1" height="321" fill="#6070ff" opacity="0.05"/><rect x="467.6" y="196" width="1" height="321" fill="#000030" opacity="0.05"/><rect x="1162.2" y="196" width="1" height="321" fill="#000030" opacity="0.10"/><rect x="388.5" y="196" width="1" height="321" fill="#000030" opacity="0.09"/><rect x="703.5" y="196" width="1" height="321" fill="#000030" opacity="0.08"/><rect x="550.8" y="196" width="1" height="321" fill="#000030" opacity="0.13"/><rect x="896.4" y="196" width="2" height="321" fill="#000030" opacity="0.12"/><rect x="278.5" y="196" width="2" height="321" fill="#000030" opacity="0.10"/><rect x="1081.4" y="196" width="1" height="321" fill="#6070ff" opacity="0.08"/><rect x="827.0" y="196" width="1" height="321" fill="#000030" opacity="0.11"/><rect x="555.7" y="196" width="2" height="321" fill="#000030" opacity="0.11"/><rect x="557.0" y="196" width="1" height="321" fill="#000030" opacity="0.09"/><rect x="348.5" y="196" width="1" height="321" fill="#6070ff" opacity="0.08"/><rect x="1280.7" y="196" width="1" height="321" fill="#000030" opacity="0.08"/><rect x="477.3" y="196" width="1" height="321" fill="#6070ff" opacity="0.05"/><rect x="1260.7" y="196" width="1" height="321" fill="#6070ff" opacity="0.09"/><rect x="999.3" y="196" width="1" height="321" fill="#000030" opacity="0.09"/><rect x="679.2" y="196" width="2" height="321" fill="#000030" opacity="0.10"/><rect x="943.8" y="196" width="1" height="321" fill="#000030" opacity="0.08"/><rect x="708.2" y="196" width="1" height="321" fill="#6070ff" opacity="0.10"/><rect x="927.5" y="196" width="2" height="321" fill="#000030" opacity="0.11"/><rect x="1061.3" y="196" width="1" height="321" fill="#000030" opacity="0.11"/><rect x="809.5" y="196" width="2" height="321" fill="#000030" opacity="0.07"/><rect x="719.8" y="196" width="1" height="321" fill="#000030" opacity="0.06"/><rect x="744.9" y="196" width="1" height="321" fill="#000030" opacity="0.08"/><rect x="1061.6" y="196" width="1" height="321" fill="#000030" opacity="0.16"/><rect x="1027.5" y="196" width="1" height="321" fill="#000030" opacity="0.08"/><rect x="1279.2" y="196" width="1" height="321" fill="#000030" opacity="0.07"/><rect x="956.8" y="196" width="1" height="321" fill="#6070ff" opacity="0.05"/><rect x="405.5" y="196" width="1" height="321" fill="#000030" opacity="0.10"/><rect x="457.3" y="196" width="1" height="321" fill="#000030" opacity="0.07"/><rect x="665.2" y="196" width="1" height="321" fill="#000030" opacity="0.09"/><rect x="1100.9" y="196" width="1" height="321" fill="#000030" opacity="0.10"/><rect x="398.4" y="196" width="2" height="321" fill="#000030" opacity="0.13"/><rect x="1227.5" y="196" width="2" height="321" fill="#6070ff" opacity="0.09"/><rect x="967.7" y="196" width="1" height="321" fill="#000030" opacity="0.12"/><rect x="736.1" y="196" width="1" height="321" fill="#000030" opacity="0.12"/><rect x="350.9" y="196" width="2" height="321" fill="#000030" opacity="0.14"/><rect x="1016.6" y="196" width="1" height="321" fill="#000030" opacity="0.14"/><rect x="767.3" y="196" width="1" height="321" fill="#6070ff" opacity="0.07"/><rect x="960.3" y="196" width="1" height="321" fill="#000030" opacity="0.14"/><rect x="665.6" y="196" width="2" height="321" fill="#000030" opacity="0.05"/><rect x="832.9" y="196" width="1" height="321" fill="#000030" opacity="0.11"/><rect x="354.4" y="196" width="2" height="321" fill="#000030" opacity="0.13"/><rect x="799.2" y="196" width="1" height="321" fill="#000030" opacity="0.10"/><rect x="1270.7" y="196" width="1" height="321" fill="#000030" opacity="0.09"/><rect x="1070.2" y="196" width="1" height="321" fill="#000030" opacity="0.12"/><rect x="518.2" y="196" width="2" height="321" fill="#6070ff" opacity="0.04"/><rect x="326.4" y="196" width="2" height="321" fill="#000030" opacity="0.11"/><rect x="363.2" y="196" width="1" height="321" fill="#6070ff" opacity="0.10"/><rect x="815.3" y="196" width="1" height="321" fill="#6070ff" opacity="0.07"/><rect x="423.0" y="196" width="1" height="321" fill="#000030" opacity="0.10"/><rect x="853.1" y="196" width="1" height="321" fill="#000030" opacity="0.09"/><rect x="936.2" y="196" width="2" height="321" fill="#6070ff" opacity="0.10"/><rect x="1067.2" y="196" width="1" height="321" fill="#6070ff" opacity="0.06"/><rect x="1165.4" y="196" width="1" height="321" fill="#6070ff" opacity="0.08"/><rect x="1308.5" y="196" width="1" height="321" fill="#6070ff" opacity="0.04"/><rect x="1026.0" y="196" width="1" height="321" fill="#000030" opacity="0.08"/><rect x="571.6" y="196" width="2" height="321" fill="#6070ff" opacity="0.07"/><rect x="934.6" y="196" width="1" height="321" fill="#000030" opacity="0.15"/><rect x="1169.5" y="196" width="1" height="321" fill="#000030" opacity="0.14"/><rect x="1225.1" y="196" width="1" height="321" fill="#000030" opacity="0.12"/><rect x="261.2" y="196" width="1" height="321" fill="#000030" opacity="0.15"/><rect x="954.7" y="196" width="1" height="321" fill="#000030" opacity="0.11"/><rect x="1169.2" y="196" width="1" height="321" fill="#6070ff" opacity="0.06"/><rect x="410.2" y="196" width="2" height="321" fill="#000030" opacity="0.12"/><rect x="989.4" y="196" width="1" height="321" fill="#000030" opacity="0.07"/><rect x="994.6" y="196" width="1" height="321" fill="#6070ff" opacity="0.08"/><rect x="371.6" y="196" width="1" height="321" fill="#000030" opacity="0.10"/><rect x="1139.9" y="196" width="2" height="321" fill="#6070ff" opacity="0.07"/><rect x="769.1" y="196" width="1" height="321" fill="#6070ff" opacity="0.05"/><rect x="423.1" y="196" width="1" height="321" fill="#000030" opacity="0.14"/><rect x="751.3" y="196" width="2" height="321" fill="#000030" opacity="0.14"/><rect x="650.7" y="196" width="2" height="321" fill="#000030" opacity="0.07"/><rect x="634.9" y="196" width="1" height="321" fill="#000030" opacity="0.12"/><rect x="983.6" y="196" width="1" height="321" fill="#000030" opacity="0.11"/><rect x="769.4" y="196" width="1" height="321" fill="#000030" opacity="0.07"/><rect x="694.7" y="196" width="1" height="321" fill="#000030" opacity="0.06"/><rect x="958.1" y="196" width="1" height="321" fill="#6070ff" opacity="0.09"/><rect x="844.6" y="196" width="1" height="321" fill="#000030" opacity="0.10"/><rect x="702.0" y="196" width="1" height="321" fill="#000030" opacity="0.08"/><rect x="1140.6" y="196" width="2" height="321" fill="#000030" opacity="0.11"/><rect x="539.0" y="196" width="1" height="321" fill="#000030" opacity="0.12"/><rect x="1101.9" y="196" width="1" height="321" fill="#000030" opacity="0.08"/><rect x="568.8" y="196" width="1" height="321" fill="#000030" opacity="0.09"/><rect x="844.7" y="196" width="2" height="321" fill="#000030" opacity="0.09"/><rect x="362.4" y="196" width="1" height="321" fill="#000030" opacity="0.14"/><rect x="759.0" y="196" width="1" height="321" fill="#6070ff" opacity="0.08"/><rect x="923.2" y="196" width="1" height="321" fill="#000030" opacity="0.05"/><rect x="930.5" y="196" width="1" height="321" fill="#000030" opacity="0.12"/><rect x="1185.5" y="196" width="2" height="321" fill="#000030" opacity="0.15"/><rect x="954.5" y="196" width="1" height="321" fill="#000030" opacity="0.14"/><rect x="853.2" y="196" width="1" height="321" fill="#000030" opacity="0.07"/><rect x="282.0" y="196" width="1" height="321" fill="#6070ff" opacity="0.07"/><rect x="870.7" y="196" width="1" height="321" fill="#6070ff" opacity="0.07"/><rect x="287.6" y="196" width="1" height="321" fill="#6070ff" opacity="0.07"/><rect x="1239.0" y="196" width="2" height="321" fill="#000030" opacity="0.05"/><rect x="663.9" y="196" width="1" height="321" fill="#6070ff" opacity="0.09"/><rect x="838.8" y="196" width="1" height="321" fill="#6070ff" opacity="0.05"/><rect x="409.2" y="196" width="1" height="321" fill="#6070ff" opacity="0.04"/><rect x="984.8" y="196" width="1" height="321" fill="#000030" opacity="0.07"/><rect x="376.3" y="196" width="2" height="321" fill="#000030" opacity="0.08"/><rect x="860.6" y="196" width="2" height="321" fill="#000030" opacity="0.15"/><rect x="640.9" y="196" width="1" height="321" fill="#000030" opacity="0.08"/><rect x="848.2" y="196" width="2" height="321" fill="#6070ff" opacity="0.08"/><rect x="1208.0" y="196" width="1" height="321" fill="#000030" opacity="0.05"/><rect x="260.9" y="196" width="1" height="321" fill="#6070ff" opacity="0.06"/><rect x="1034.3" y="196" width="1" height="321" fill="#6070ff" opacity="0.08"/><rect x="587.2" y="196" width="2" height="321" fill="#6070ff" opacity="0.08"/><rect x="401.8" y="196" width="1" height="321" fill="#000030" opacity="0.15"/><rect x="422.5" y="196" width="2" height="321" fill="#6070ff" opacity="0.06"/><rect x="1095.7" y="196" width="1" height="321" fill="#000030" opacity="0.08"/><rect x="310.6" y="196" width="1" height="321" fill="#000030" opacity="0.14"/><rect x="895.4" y="196" width="1" height="321" fill="#6070ff" opacity="0.10"/><rect x="511.3" y="196" width="2" height="321" fill="#6070ff" opacity="0.08"/><rect x="1214.6" y="196" width="2" height="321" fill="#000030" opacity="0.13"/><rect x="592.9" y="196" width="1" height="321" fill="#6070ff" opacity="0.05"/><rect x="1241.1" y="196" width="1" height="321" fill="#000030" opacity="0.14"/><rect x="1123.3" y="196" width="1" height="321" fill="#000030" opacity="0.16"/><rect x="1107.6" y="196" width="2" height="321" fill="#000030" opacity="0.11"/><rect x="829.3" y="196" width="2" height="321" fill="#6070ff" opacity="0.05"/><rect x="1056.7" y="196" width="1" height="321" fill="#000030" opacity="0.12"/><rect x="978.2" y="196" width="2" height="321" fill="#000030" opacity="0.15"/><rect x="879.5" y="196" width="1" height="321" fill="#6070ff" opacity="0.07"/><rect x="339.9" y="196" width="1" height="321" fill="#000030" opacity="0.08"/><rect x="872.1" y="196" width="1" height="321" fill="#000030" opacity="0.10"/><rect x="882.7" y="196" width="1" height="321" fill="#000030" opacity="0.07"/><rect x="440.5" y="196" width="1" height="321" fill="#000030" opacity="0.11"/><rect x="633.3" y="196" width="1" height="321" fill="#000030" opacity="0.05"/><rect x="1323.9" y="196" width="1" height="321" fill="#000030" opacity="0.09"/><rect x="746.4" y="196" width="1" height="321" fill="#000030" opacity="0.08"/><rect x="277.8" y="196" width="1" height="321" fill="#000030" opacity="0.06"/><rect x="466.4" y="196" width="2" height="321" fill="#000030" opacity="0.08"/><rect x="1088.1" y="196" width="2" height="321" fill="#000030" opacity="0.15"/><rect x="1075.2" y="196" width="1" height="321" fill="#000030" opacity="0.14"/><rect x="611.6" y="196" width="1" height="321" fill="#6070ff" opacity="0.05"/><rect x="300.2" y="196" width="1" height="321" fill="#6070ff" opacity="0.07"/><rect x="1159.9" y="196" width="1" height="321" fill="#6070ff" opacity="0.10"/><rect x="1009.3" y="196" width="1" height="321" fill="#000030" opacity="0.09"/><rect x="497.3" y="196" width="1" height="321" fill="#6070ff" opacity="0.05"/><rect x="1164.4" y="196" width="1" height="321" fill="#000030" opacity="0.16"/><rect x="484.9" y="196" width="1" height="321" fill="#000030" opacity="0.15"/><rect x="309.1" y="196" width="1" height="321" fill="#000030" opacity="0.08"/><rect x="800.4" y="196" width="2" height="321" fill="#000030" opacity="0.06"/><rect x="588.7" y="196" width="1" height="321" fill="#000030" opacity="0.12"/><rect x="568.3" y="196" width="2" height="321" fill="#000030" opacity="0.10"/><rect x="647.2" y="196" width="2" height="321" fill="#000030" opacity="0.09"/><rect x="655.8" y="196" width="2" height="321" fill="#000030" opacity="0.14"/><rect x="1234.3" y="196" width="1" height="321" fill="#6070ff" opacity="0.08"/><rect x="456.1" y="196" width="1" height="321" fill="#000030" opacity="0.15"/><rect x="483.6" y="196" width="1" height="321" fill="#000030" opacity="0.14"/><rect x="1281.5" y="196" width="2" height="321" fill="#000030" opacity="0.12"/><rect x="734.4" y="196" width="1" height="321" fill="#000030" opacity="0.14"/><rect x="761.7" y="196" width="1" height="321" fill="#000030" opacity="0.09"/><rect x="1041.4" y="196" width="1" height="321" fill="#6070ff" opacity="0.07"/><rect x="401.6" y="196" width="1" height="321" fill="#000030" opacity="0.10"/><rect x="512.0" y="196" width="1" height="321" fill="#000030" opacity="0.11"/><rect x="565.9" y="196" width="1" height="321" fill="#000030" opacity="0.10"/><rect x="589.1" y="196" width="2" height="321" fill="#000030" opacity="0.07"/><rect x="800.6" y="196" width="1" height="321" fill="#6070ff" opacity="0.09"/><rect x="374.0" y="196" width="1" height="321" fill="#000030" opacity="0.10"/><rect x="528.0" y="196" width="1" height="321" fill="#000030" opacity="0.06"/><rect x="558.2" y="196" width="1" height="321" fill="#000030" opacity="0.14"/><rect x="1303.8" y="196" width="1" height="321" fill="#000030" opacity="0.10"/><rect x="794.4" y="196" width="1" height="321" fill="#6070ff" opacity="0.04"/><rect x="1145.5" y="196" width="1" height="321" fill="#000030" opacity="0.09"/><rect x="288.9" y="196" width="2" height="321" fill="#000030" opacity="0.08"/><rect x="440.5" y="196" width="1" height="321" fill="#000030" opacity="0.13"/><rect x="457.8" y="196" width="1" height="321" fill="#000030" opacity="0.15"/><rect x="1035.8" y="196" width="1" height="321" fill="#000030" opacity="0.07"/><rect x="907.7" y="196" width="1" height="321" fill="#000030" opacity="0.07"/><rect x="316.1" y="196" width="2" height="321" fill="#000030" opacity="0.11"/><rect x="621.1" y="196" width="1" height="321" fill="#6070ff" opacity="0.05"/><rect x="688.1" y="196" width="2" height="321" fill="#000030" opacity="0.15"/><rect x="533.1" y="196" width="1" height="321" fill="#000030" opacity="0.05"/><rect x="1004.8" y="196" width="1" height="321" fill="#000030" opacity="0.11"/><rect x="727.3" y="196" width="1" height="321" fill="#000030" opacity="0.09"/><rect x="509.8" y="196" width="1" height="321" fill="#6070ff" opacity="0.07"/><rect x="1216.7" y="196" width="1" height="321" fill="#000030" opacity="0.15"/><rect x="780.4" y="196" width="1" height="321" fill="#000030" opacity="0.05"/><rect x="1291.8" y="196" width="1" height="321" fill="#000030" opacity="0.07"/><rect x="582.5" y="196" width="1" height="321" fill="#000030" opacity="0.06"/><rect x="1001.3" y="196" width="1" height="321" fill="#000030" opacity="0.05"/><rect x="893.5" y="196" width="2" height="321" fill="#000030" opacity="0.13"/><rect x="356.3" y="196" width="1" height="321" fill="#000030" opacity="0.05"/><rect x="378.1" y="196" width="2" height="321" fill="#000030" opacity="0.06"/><rect x="376.5" y="196" width="1" height="321" fill="#000030" opacity="0.14"/><rect x="404.3" y="196" width="2" height="321" fill="#6070ff" opacity="0.05"/><rect x="1138.7" y="196" width="2" height="321" fill="#6070ff" opacity="0.08"/><rect x="897.2" y="196" width="1" height="321" fill="#6070ff" opacity="0.10"/><rect x="301.2" y="196" width="1" height="321" fill="#000030" opacity="0.09"/><rect x="1152.3" y="196" width="2" height="321" fill="#000030" opacity="0.14"/><rect x="1162.1" y="196" width="1" height="321" fill="#000030" opacity="0.11"/><rect x="1281.4" y="196" width="1" height="321" fill="#000030" opacity="0.15"/><rect x="962.5" y="196" width="1" height="321" fill="#000030" opacity="0.06"/><rect x="447.9" y="196" width="1" height="321" fill="#6070ff" opacity="0.05"/><rect x="969.0" y="196" width="1" height="321" fill="#000030" opacity="0.10"/><rect x="674.6" y="196" width="2" height="321" fill="#000030" opacity="0.14"/><rect x="1201.9" y="196" width="1" height="321" fill="#000030" opacity="0.15"/><rect x="916.8" y="196" width="1" height="321" fill="#000030" opacity="0.12"/><rect x="516.1" y="196" width="1" height="321" fill="#6070ff" opacity="0.05"/><rect x="287.7" y="196" width="1" height="321" fill="#000030" opacity="0.09"/><rect x="425.7" y="196" width="1" height="321" fill="#000030" opacity="0.06"/><rect x="883.6" y="196" width="1" height="321" fill="#6070ff" opacity="0.05"/><rect x="387.1" y="196" width="1" height="321" fill="#6070ff" opacity="0.07"/><rect x="541.6" y="196" width="1" height="321" fill="#000030" opacity="0.14"/><rect x="905.0" y="196" width="1" height="321" fill="#6070ff" opacity="0.05"/><rect x="1013.6" y="196" width="2" height="321" fill="#000030" opacity="0.12"/><rect x="752.4" y="196" width="1" height="321" fill="#000030" opacity="0.08"/><rect x="484.8" y="196" width="2" height="321" fill="#6070ff" opacity="0.04"/><rect x="626.6" y="196" width="1" height="321" fill="#000030" opacity="0.11"/><rect x="776.7" y="196" width="1" height="321" fill="#000030" opacity="0.08"/><rect x="1080.4" y="196" width="1" height="321" fill="#000030" opacity="0.12"/><rect x="621.5" y="196" width="1" height="321" fill="#6070ff" opacity="0.09"/><rect x="628.2" y="196" width="1" height="321" fill="#000030" opacity="0.16"/><rect x="978.2" y="196" width="1" height="321" fill="#6070ff" opacity="0.06"/><rect x="626.4" y="196" width="1" height="321" fill="#000030" opacity="0.14"/><rect x="805.2" y="196" width="2" height="321" fill="#000030" opacity="0.14"/><rect x="1011.7" y="196" width="1" height="321" fill="#6070ff" opacity="0.09"/><rect x="249.7" y="196" width="1" height="321" fill="#6070ff" opacity="0.06"/><rect x="1319.3" y="196" width="1" height="321" fill="#6070ff" opacity="0.09"/><rect x="547.2" y="196" width="1" height="321" fill="#6070ff" opacity="0.09"/><rect x="994.4" y="196" width="1" height="321" fill="#000030" opacity="0.08"/><rect x="667.7" y="196" width="2" height="321" fill="#000030" opacity="0.05"/><rect x="1051.9" y="196" width="2" height="321" fill="#6070ff" opacity="0.07"/><rect x="444.3" y="196" width="1" height="321" fill="#000030" opacity="0.10"/><rect x="652.9" y="196" width="1" height="321" fill="#000030" opacity="0.14"/><rect x="602.1" y="196" width="1" height="321" fill="#000030" opacity="0.07"/><rect x="706.4" y="196" width="1" height="321" fill="#000030" opacity="0.06"/><rect x="856.3" y="196" width="2" height="321" fill="#000030" opacity="0.15"/><rect x="1081.9" y="196" width="2" height="321" fill="#6070ff" opacity="0.06"/><rect x="632.0" y="196" width="1" height="321" fill="#6070ff" opacity="0.10"/><rect x="976.9" y="196" width="1" height="321" fill="#000030" opacity="0.10"/><rect x="787.0" y="196" width="1" height="321" fill="#000030" opacity="0.16"/><rect x="771.6" y="196" width="2" height="321" fill="#000030" opacity="0.13"/><rect x="1052.7" y="196" width="1" height="321" fill="#000030" opacity="0.09"/><rect x="641.7" y="196" width="1" height="321" fill="#000030" opacity="0.11"/><rect x="364.6" y="196" width="1" height="321" fill="#000030" opacity="0.14"/><rect x="1316.4" y="196" width="2" height="321" fill="#000030" opacity="0.11"/><rect x="1128.1" y="196" width="1" height="321" fill="#000030" opacity="0.10"/><rect x="310.1" y="196" width="1" height="321" fill="#000030" opacity="0.11"/><rect x="928.1" y="196" width="1" height="321" fill="#6070ff" opacity="0.04"/><rect x="248.0" y="196" width="1" height="321" fill="#000030" opacity="0.09"/><rect x="351.6" y="196" width="1" height="321" fill="#000030" opacity="0.07"/><rect x="783.7" y="196" width="1" height="321" fill="#000030" opacity="0.11"/><rect x="689.8" y="196" width="1" height="321" fill="#000030" opacity="0.07"/><rect x="1066.8" y="196" width="1" height="321" fill="#000030" opacity="0.06"/><rect x="429.5" y="196" width="2" height="321" fill="#6070ff" opacity="0.08"/><rect x="1117.7" y="196" width="1" height="321" fill="#000030" opacity="0.13"/><rect x="871.3" y="196" width="1" height="321" fill="#000030" opacity="0.09"/><rect x="428.3" y="196" width="1" height="321" fill="#000030" opacity="0.14"/><rect x="1270.4" y="196" width="1" height="321" fill="#000030" opacity="0.07"/><rect x="920.2" y="196" width="1" height="321" fill="#000030" opacity="0.07"/><rect x="673.5" y="196" width="1" height="321" fill="#6070ff" opacity="0.04"/><rect x="502.8" y="196" width="1" height="321" fill="#000030" opacity="0.07"/><rect x="880.1" y="196" width="1" height="321" fill="#000030" opacity="0.05"/><rect x="1183.1" y="196" width="2" height="321" fill="#000030" opacity="0.10"/><rect x="517.6" y="196" width="2" height="321" fill="#000030" opacity="0.08"/><rect x="666.8" y="196" width="1" height="321" fill="#6070ff" opacity="0.06"/><rect x="1192.1" y="196" width="2" height="321" fill="#000030" opacity="0.14"/><rect x="508.3" y="196" width="1" height="321" fill="#000030" opacity="0.09"/><rect x="446.9" y="196" width="1" height="321" fill="#6070ff" opacity="0.07"/><rect x="369.3" y="196" width="2" height="321" fill="#000030" opacity="0.09"/><rect x="315.8" y="196" width="1" height="321" fill="#6070ff" opacity="0.09"/><rect x="625.0" y="196" width="1" height="321" fill="#6070ff" opacity="0.05"/><rect x="551.8" y="196" width="1" height="321" fill="#6070ff" opacity="0.04"/><rect x="963.7" y="196" width="1" height="321" fill="#000030" opacity="0.08"/><rect x="385.5" y="196" width="1" height="321" fill="#000030" opacity="0.11"/><rect x="1097.0" y="196" width="2" height="321" fill="#6070ff" opacity="0.09"/><rect x="1115.9" y="196" width="1" height="321" fill="#000030" opacity="0.09"/><rect x="1026.7" y="196" width="2" height="321" fill="#000030" opacity="0.08"/><rect x="760.0" y="196" width="1" height="321" fill="#000030" opacity="0.14"/><rect x="975.7" y="196" width="1" height="321" fill="#6070ff" opacity="0.08"/><rect x="643.2" y="196" width="1" height="321" fill="#6070ff" opacity="0.08"/><rect x="475.0" y="196" width="1" height="321" fill="#000030" opacity="0.11"/><rect x="537.6" y="196" width="2" height="321" fill="#000030" opacity="0.12"/><rect x="859.2" y="196" width="1" height="321" fill="#000030" opacity="0.09"/><rect x="338.1" y="196" width="1" height="321" fill="#000030" opacity="0.09"/><rect x="962.1" y="196" width="1" height="321" fill="#000030" opacity="0.11"/><rect x="636.1" y="196" width="1" height="321" fill="#000030" opacity="0.06"/><rect x="581.8" y="196" width="1" height="321" fill="#000030" opacity="0.06"/><rect x="1020.5" y="196" width="1" height="321" fill="#000030" opacity="0.09"/><rect x="1228.5" y="196" width="1" height="321" fill="#000030" opacity="0.07"/><rect x="641.6" y="196" width="1" height="321" fill="#6070ff" opacity="0.04"/><rect x="1006.5" y="196" width="2" height="321" fill="#000030" opacity="0.16"/><rect x="678.4" y="196" width="1" height="321" fill="#000030" opacity="0.08"/><rect x="538.1" y="196" width="1" height="321" fill="#000030" opacity="0.09"/><rect x="903.4" y="196" width="2" height="321" fill="#000030" opacity="0.13"/><rect x="414.0" y="196" width="1" height="321" fill="#000030" opacity="0.12"/><rect x="1263.8" y="196" width="1" height="321" fill="#6070ff" opacity="0.08"/><rect x="520.6" y="196" width="2" height="321" fill="#000030" opacity="0.15"/><rect x="366.0" y="196" width="1" height="321" fill="#000030" opacity="0.15"/><rect x="878.1" y="196" width="1" height="321" fill="#000030" opacity="0.12"/><rect x="285.2" y="196" width="1" height="321" fill="#000030" opacity="0.14"/><rect x="619.0" y="196" width="1" height="321" fill="#6070ff" opacity="0.08"/><rect x="670.9" y="196" width="1" height="321" fill="#000030" opacity="0.11"/><rect x="622.7" y="196" width="2" height="321" fill="#6070ff" opacity="0.10"/><rect x="993.3" y="196" width="2" height="321" fill="#000030" opacity="0.12"/><rect x="467.9" y="196" width="1" height="321" fill="#6070ff" opacity="0.09"/><rect x="292.3" y="196" width="1" height="321" fill="#000030" opacity="0.11"/><rect x="1293.9" y="196" width="1" height="321" fill="#000030" opacity="0.08"/><rect x="309.3" y="196" width="1" height="321" fill="#000030" opacity="0.10"/><rect x="462.9" y="196" width="1" height="321" fill="#000030" opacity="0.07"/><rect x="1009.9" y="196" width="2" height="321" fill="#000030" opacity="0.13"/><rect x="251.4" y="196" width="2" height="321" fill="#000030" opacity="0.15"/><rect x="625.3" y="196" width="1" height="321" fill="#000030" opacity="0.15"/><rect x="398.5" y="196" width="1" height="321" fill="#000030" opacity="0.12"/><rect x="372.6" y="196" width="2" height="321" fill="#000030" opacity="0.12"/><rect x="412.5" y="196" width="2" height="321" fill="#6070ff" opacity="0.09"/><rect x="368.9" y="196" width="1" height="321" fill="#000030" opacity="0.09"/><rect x="468.4" y="196" width="1" height="321" fill="#000030" opacity="0.08"/><rect x="364.7" y="196" width="1" height="321" fill="#6070ff" opacity="0.10"/><rect x="419.5" y="196" width="2" height="321" fill="#6070ff" opacity="0.07"/><rect x="558.2" y="196" width="1" height="321" fill="#000030" opacity="0.05"/><rect x="1318.5" y="196" width="2" height="321" fill="#000030" opacity="0.13"/><rect x="603.9" y="196" width="1" height="321" fill="#000030" opacity="0.12"/><rect x="1280.2" y="196" width="2" height="321" fill="#000030" opacity="0.14"/><rect x="593.2" y="196" width="1" height="321" fill="#000030" opacity="0.12"/><rect x="924.2" y="196" width="1" height="321" fill="#000030" opacity="0.06"/><rect x="1053.7" y="196" width="1" height="321" fill="#6070ff" opacity="0.09"/><rect x="565.6" y="196" width="1" height="321" fill="#000030" opacity="0.06"/><rect x="1022.8" y="196" width="1" height="321" fill="#000030" opacity="0.09"/><rect x="945.4" y="196" width="1" height="321" fill="#000030" opacity="0.08"/><rect x="392.5" y="196" width="1" height="321" fill="#000030" opacity="0.08"/><rect x="289.6" y="196" width="2" height="321" fill="#000030" opacity="0.15"/><rect x="779.9" y="196" width="2" height="321" fill="#000030" opacity="0.16"/><rect x="897.0" y="196" width="1" height="321" fill="#000030" opacity="0.13"/><rect x="422.1" y="196" width="2" height="321" fill="#6070ff" opacity="0.05"/><rect x="288.2" y="196" width="2" height="321" fill="#6070ff" opacity="0.05"/><rect x="1027.2" y="196" width="1" height="321" fill="#000030" opacity="0.14"/><rect x="1170.5" y="196" width="2" height="321" fill="#000030" opacity="0.08"/><rect x="960.9" y="196" width="2" height="321" fill="#000030" opacity="0.06"/><rect x="254.5" y="196" width="1" height="321" fill="#000030" opacity="0.09"/><rect x="249.5" y="196" width="1" height="321" fill="#000030" opacity="0.10"/><rect x="832.2" y="196" width="2" height="321" fill="#6070ff" opacity="0.10"/><rect x="1228.2" y="196" width="1" height="321" fill="#6070ff" opacity="0.10"/><rect x="915.7" y="196" width="1" height="321" fill="#000030" opacity="0.12"/></g>
<rect x="730" y="196" width="108" height="149" fill="url(#gRed)"/>
<rect x="761.8" y="196" width="1" height="149" fill="#a02000" opacity="0.14"/><rect x="781.4" y="196" width="1" height="149" fill="#ff9060" opacity="0.08"/><rect x="766.7" y="196" width="1" height="149" fill="#ff9060" opacity="0.13"/><rect x="753.8" y="196" width="1" height="149" fill="#a02000" opacity="0.11"/><rect x="745.7" y="196" width="1" height="149" fill="#a02000" opacity="0.10"/><rect x="830.9" y="196" width="1" height="149" fill="#a02000" opacity="0.10"/><rect x="790.4" y="196" width="1" height="149" fill="#a02000" opacity="0.07"/><rect x="754.3" y="196" width="1" height="149" fill="#ff9060" opacity="0.10"/><rect x="742.0" y="196" width="1" height="149" fill="#a02000" opacity="0.11"/><rect x="750.1" y="196" width="1" height="149" fill="#a02000" opacity="0.11"/><rect x="754.3" y="196" width="1" height="149" fill="#a02000" opacity="0.07"/><rect x="791.3" y="196" width="1" height="149" fill="#ff9060" opacity="0.12"/><rect x="827.3" y="196" width="1" height="149" fill="#ff9060" opacity="0.13"/><rect x="802.7" y="196" width="1" height="149" fill="#a02000" opacity="0.06"/><rect x="783.8" y="196" width="1" height="149" fill="#ff9060" opacity="0.11"/><rect x="832.8" y="196" width="1" height="149" fill="#ff9060" opacity="0.09"/><rect x="803.4" y="196" width="1" height="149" fill="#ff9060" opacity="0.14"/><rect x="750.5" y="196" width="1" height="149" fill="#a02000" opacity="0.12"/><rect x="744.6" y="196" width="1" height="149" fill="#ff9060" opacity="0.09"/><rect x="735.1" y="196" width="1" height="149" fill="#ff9060" opacity="0.05"/><rect x="793.6" y="196" width="1" height="149" fill="#ff9060" opacity="0.09"/><rect x="742.9" y="196" width="1" height="149" fill="#ff9060" opacity="0.09"/><rect x="825.1" y="196" width="1" height="149" fill="#ff9060" opacity="0.10"/><rect x="828.2" y="196" width="1" height="149" fill="#a02000" opacity="0.07"/><rect x="809.8" y="196" width="1" height="149" fill="#a02000" opacity="0.12"/>
<polyline points="245,196 245,361 299,415 246,470 246,481 1327,477 1327,465 1273,412 1325,357 1325,196" fill="none" stroke="#e8c8c0" stroke-width="1" opacity="0.8"/>
<polyline points="730,196 730,345 838,345 838,196" fill="none" stroke="#e8d0c0" stroke-width="1" opacity="0.6"/>
<rect x="137" y="196" width="1257" height="1" fill="#9aa0d0" opacity='0.7'/>
<path d="M907,196 L906,392" stroke="#3a5af0" stroke-width="3.5" opacity="0.45"/><path d="M907,196 L906,392" stroke="#80a8ff" stroke-width="1.2" opacity="0.9"/>
<rect x="1394" y="196" width="3" height="321" fill="#000" />
<line x1="137" y1="281.5" x2="1394" y2="281.5" stroke="#b8b8d8" stroke-width="1" opacity="0.75"/>
<line x1="787" y1="196" x2="787" y2="517" stroke="#b8b8d8" stroke-width="1" opacity="0.75"/>
<path d="M781,509 L793,509 L787,516Z" fill="none" stroke="#fff" stroke-width="1"/>
<path d="M137,272 L142,276 L137,280" fill="none" stroke="#fff" stroke-width="1"/>
<path d="M1391,347 L1398,352 L1391,357Z" fill="none" stroke="#e0e020" stroke-width="1.2"/>
<rect x="135" y="195" width="2" height="323" fill="#000" />
<line x1="130" y1="517.5" x2="135" y2="517.5" stroke="#000" stroke-width="1" />
<line x1="132.5" y1="507.5" x2="135" y2="507.5" stroke="#000" stroke-width="1" />
<line x1="132.5" y1="496.5" x2="135" y2="496.5" stroke="#000" stroke-width="1" />
<line x1="132.5" y1="485.5" x2="135" y2="485.5" stroke="#000" stroke-width="1" />
<line x1="132.5" y1="474.5" x2="135" y2="474.5" stroke="#000" stroke-width="1" />
<line x1="130" y1="464.5" x2="135" y2="464.5" stroke="#000" stroke-width="1" />
<line x1="132.5" y1="453.5" x2="135" y2="453.5" stroke="#000" stroke-width="1" />
<line x1="132.5" y1="442.5" x2="135" y2="442.5" stroke="#000" stroke-width="1" />
<line x1="132.5" y1="432.5" x2="135" y2="432.5" stroke="#000" stroke-width="1" />
<line x1="132.5" y1="421.5" x2="135" y2="421.5" stroke="#000" stroke-width="1" />
<line x1="130" y1="410.5" x2="135" y2="410.5" stroke="#000" stroke-width="1" />
<line x1="132.5" y1="399.5" x2="135" y2="399.5" stroke="#000" stroke-width="1" />
<line x1="132.5" y1="389.5" x2="135" y2="389.5" stroke="#000" stroke-width="1" />
<line x1="132.5" y1="378.5" x2="135" y2="378.5" stroke="#000" stroke-width="1" />
<line x1="132.5" y1="367.5" x2="135" y2="367.5" stroke="#000" stroke-width="1" />
<line x1="130" y1="356.5" x2="135" y2="356.5" stroke="#000" stroke-width="1" />
<line x1="132.5" y1="346.5" x2="135" y2="346.5" stroke="#000" stroke-width="1" />
<line x1="132.5" y1="335.5" x2="135" y2="335.5" stroke="#000" stroke-width="1" />
<line x1="132.5" y1="324.5" x2="135" y2="324.5" stroke="#000" stroke-width="1" />
<line x1="132.5" y1="314.5" x2="135" y2="314.5" stroke="#000" stroke-width="1" />
<line x1="130" y1="303.5" x2="135" y2="303.5" stroke="#000" stroke-width="1" />
<line x1="132.5" y1="292.5" x2="135" y2="292.5" stroke="#000" stroke-width="1" />
<line x1="132.5" y1="281.5" x2="135" y2="281.5" stroke="#000" stroke-width="1" />
<line x1="132.5" y1="271.5" x2="135" y2="271.5" stroke="#000" stroke-width="1" />
<line x1="132.5" y1="260.5" x2="135" y2="260.5" stroke="#000" stroke-width="1" />
<line x1="130" y1="249.5" x2="135" y2="249.5" stroke="#000" stroke-width="1" />
<line x1="132.5" y1="239.5" x2="135" y2="239.5" stroke="#000" stroke-width="1" />
<line x1="132.5" y1="228.5" x2="135" y2="228.5" stroke="#000" stroke-width="1" />
<line x1="132.5" y1="217.5" x2="135" y2="217.5" stroke="#000" stroke-width="1" />
<line x1="132.5" y1="206.5" x2="135" y2="206.5" stroke="#000" stroke-width="1" />
<line x1="130" y1="196.5" x2="135" y2="196.5" stroke="#000" stroke-width="1" />
<text x="127" y="522.3" font-size="13.5" fill="#111" text-anchor="end" >0.00</text>
<text x="127" y="468.69999999999993" font-size="13.5" fill="#111" text-anchor="end" >0.05</text>
<text x="127" y="415.09999999999997" font-size="13.5" fill="#111" text-anchor="end" >0.10</text>
<text x="127" y="361.49999999999994" font-size="13.5" fill="#111" text-anchor="end" >0.15</text>
<text x="127" y="307.9" font-size="13.5" fill="#111" text-anchor="end" >0.20</text>
<text x="127" y="254.29999999999995" font-size="13.5" fill="#111" text-anchor="end" >0.25</text>
<text x="127" y="200.69999999999993" font-size="13.5" fill="#111" text-anchor="end" >0.30</text>
<text x="0" y="0" font-size="13.5" fill="#111" text-anchor="middle" transform="translate(92.5,356) rotate(-90)">mm</text>
<line x1="135" y1="517.5" x2="1397" y2="517.5" stroke="#300" stroke-width="1" />
<line x1="135.5" y1="517" x2="135.5" y2="523" stroke="#000" stroke-width="1" />
<line x1="178.5" y1="517" x2="178.5" y2="520" stroke="#000" stroke-width="1" />
<line x1="221.5" y1="517" x2="221.5" y2="520" stroke="#000" stroke-width="1" />
<line x1="264.5" y1="517" x2="264.5" y2="520" stroke="#000" stroke-width="1" />
<line x1="307.5" y1="517" x2="307.5" y2="520" stroke="#000" stroke-width="1" />
<line x1="350.5" y1="517" x2="350.5" y2="523" stroke="#000" stroke-width="1" />
<line x1="393.5" y1="517" x2="393.5" y2="520" stroke="#000" stroke-width="1" />
<line x1="436.5" y1="517" x2="436.5" y2="520" stroke="#000" stroke-width="1" />
<line x1="479.5" y1="517" x2="479.5" y2="520" stroke="#000" stroke-width="1" />
<line x1="522.5" y1="517" x2="522.5" y2="520" stroke="#000" stroke-width="1" />
<line x1="565.5" y1="517" x2="565.5" y2="523" stroke="#000" stroke-width="1" />
<line x1="608.5" y1="517" x2="608.5" y2="520" stroke="#000" stroke-width="1" />
<line x1="651.5" y1="517" x2="651.5" y2="520" stroke="#000" stroke-width="1" />
<line x1="694.5" y1="517" x2="694.5" y2="520" stroke="#000" stroke-width="1" />
<line x1="737.5" y1="517" x2="737.5" y2="520" stroke="#000" stroke-width="1" />
<line x1="780.5" y1="517" x2="780.5" y2="523" stroke="#000" stroke-width="1" />
<line x1="823.5" y1="517" x2="823.5" y2="520" stroke="#000" stroke-width="1" />
<line x1="866.5" y1="517" x2="866.5" y2="520" stroke="#000" stroke-width="1" />
<line x1="909.5" y1="517" x2="909.5" y2="520" stroke="#000" stroke-width="1" />
<line x1="952.5" y1="517" x2="952.5" y2="520" stroke="#000" stroke-width="1" />
<line x1="995.5" y1="517" x2="995.5" y2="523" stroke="#000" stroke-width="1" />
<line x1="1038.5" y1="517" x2="1038.5" y2="520" stroke="#000" stroke-width="1" />
<line x1="1081.5" y1="517" x2="1081.5" y2="520" stroke="#000" stroke-width="1" />
<line x1="1124.5" y1="517" x2="1124.5" y2="520" stroke="#000" stroke-width="1" />
<line x1="1167.5" y1="517" x2="1167.5" y2="520" stroke="#000" stroke-width="1" />
<line x1="1210.5" y1="517" x2="1210.5" y2="523" stroke="#000" stroke-width="1" />
<line x1="1253.5" y1="517" x2="1253.5" y2="520" stroke="#000" stroke-width="1" />
<line x1="1296.5" y1="517" x2="1296.5" y2="520" stroke="#000" stroke-width="1" />
<line x1="1339.5" y1="517" x2="1339.5" y2="520" stroke="#000" stroke-width="1" />
<line x1="1382.5" y1="517" x2="1382.5" y2="520" stroke="#000" stroke-width="1" />
<line x1="1396.5" y1="517" x2="1396.5" y2="523" stroke="#000" stroke-width="1" />
<text x="135.5" y="538" font-size="13.5" fill="#111" text-anchor="middle" >0.0</text>
<text x="350.5" y="538" font-size="13.5" fill="#111" text-anchor="middle" >0.2</text>
<text x="565.5" y="538" font-size="13.5" fill="#111" text-anchor="middle" >0.4</text>
<text x="780.5" y="538" font-size="13.5" fill="#111" text-anchor="middle" >0.6</text>
<text x="995.5" y="538" font-size="13.5" fill="#111" text-anchor="middle" >0.8</text>
<text x="1210.5" y="538" font-size="13.5" fill="#111" text-anchor="middle" >1.0</text>
<text x="1397" y="538" font-size="13.5" fill="#111" text-anchor="middle" >1.2</text>
<text x="766" y="559" font-size="13.5" fill="#111" text-anchor="middle" >mm</text>
<rect x="1407" y="196" width="17" height="321" fill="url(#gCbar)" />
<line x1="1425.5" y1="195.5" x2="1425.5" y2="518" stroke="#000" stroke-width="1" />
<line x1="1425" y1="201.5" x2="1428.5" y2="201.5" stroke="#000" stroke-width="1" />
<line x1="1425" y1="213.5" x2="1428.5" y2="213.5" stroke="#000" stroke-width="1" />
<line x1="1425" y1="225.5" x2="1428.5" y2="225.5" stroke="#000" stroke-width="1" />
<line x1="1425" y1="237.5" x2="1431" y2="237.5" stroke="#000" stroke-width="1" />
<line x1="1425" y1="249.5" x2="1428.5" y2="249.5" stroke="#000" stroke-width="1" />
<line x1="1425" y1="261.5" x2="1428.5" y2="261.5" stroke="#000" stroke-width="1" />
<line x1="1425" y1="273.5" x2="1428.5" y2="273.5" stroke="#000" stroke-width="1" />
<line x1="1425" y1="285.5" x2="1428.5" y2="285.5" stroke="#000" stroke-width="1" />
<line x1="1425" y1="297.5" x2="1431" y2="297.5" stroke="#000" stroke-width="1" />
<line x1="1425" y1="309.5" x2="1428.5" y2="309.5" stroke="#000" stroke-width="1" />
<line x1="1425" y1="321.5" x2="1428.5" y2="321.5" stroke="#000" stroke-width="1" />
<line x1="1425" y1="333.5" x2="1428.5" y2="333.5" stroke="#000" stroke-width="1" />
<line x1="1425" y1="345.5" x2="1428.5" y2="345.5" stroke="#000" stroke-width="1" />
<line x1="1425" y1="357.5" x2="1431" y2="357.5" stroke="#000" stroke-width="1" />
<line x1="1425" y1="369.5" x2="1428.5" y2="369.5" stroke="#000" stroke-width="1" />
<line x1="1425" y1="381.5" x2="1428.5" y2="381.5" stroke="#000" stroke-width="1" />
<line x1="1425" y1="393.5" x2="1428.5" y2="393.5" stroke="#000" stroke-width="1" />
<line x1="1425" y1="405.5" x2="1428.5" y2="405.5" stroke="#000" stroke-width="1" />
<line x1="1425" y1="417.5" x2="1431" y2="417.5" stroke="#000" stroke-width="1" />
<line x1="1425" y1="429.5" x2="1428.5" y2="429.5" stroke="#000" stroke-width="1" />
<line x1="1425" y1="441.5" x2="1428.5" y2="441.5" stroke="#000" stroke-width="1" />
<line x1="1425" y1="453.5" x2="1428.5" y2="453.5" stroke="#000" stroke-width="1" />
<line x1="1425" y1="465.5" x2="1428.5" y2="465.5" stroke="#000" stroke-width="1" />
<line x1="1425" y1="477.5" x2="1431" y2="477.5" stroke="#000" stroke-width="1" />
<line x1="1425" y1="489.5" x2="1428.5" y2="489.5" stroke="#000" stroke-width="1" />
<line x1="1425" y1="501.5" x2="1428.5" y2="501.5" stroke="#000" stroke-width="1" />
<line x1="1425" y1="513.5" x2="1428.5" y2="513.5" stroke="#000" stroke-width="1" />
<line x1="1425" y1="195.5" x2="1431" y2="195.5" stroke="#000" stroke-width="1" />
<line x1="1425" y1="517.5" x2="1431" y2="517.5" stroke="#000" stroke-width="1" />
<text x="1473" y="200.76" font-size="13.5" fill="#111" text-anchor="end" >347</text>
<text x="1473" y="242.4" font-size="13.5" fill="#111" text-anchor="end" >0</text>
<text x="1473" y="302.4" font-size="13.5" fill="#111" text-anchor="end" >-500</text>
<text x="1473" y="362.4" font-size="13.5" fill="#111" text-anchor="end" >-1000</text>
<text x="1473" y="422.4" font-size="13.5" fill="#111" text-anchor="end" >-1500</text>
<text x="1473" y="482.4" font-size="13.5" fill="#111" text-anchor="end" >-2000</text>
<text x="1473" y="523.32" font-size="13.5" fill="#111" text-anchor="end" >-2341</text>
<text x="0" y="0" font-size="13.5" fill="#111" text-anchor="middle" transform="translate(1485,356) rotate(90)">Å</text>
<rect x="69" y="666" width="1453" height="2" fill="#a9a9a9" />
<rect x="791" y="668" width="2" height="283" fill="#b3b3b3" />
<rect x="1523" y="171" width="109" height="774" fill="#dde7f2" />
<text x="1529" y="188" font-size="12" fill="#000" font-weight="bold" letter-spacing="-0.1">Analytical Results</text>
<circle cx="1611" cy="179.5" r="3.90" fill="#226aa6"/><rect x="1610.10" y="174.50" width="1.80" height="2.50" fill="#226aa6" transform="rotate(0.0 1611 179.5)"/><rect x="1610.10" y="174.50" width="1.80" height="2.50" fill="#226aa6" transform="rotate(45.0 1611 179.5)"/><rect x="1610.10" y="174.50" width="1.80" height="2.50" fill="#226aa6" transform="rotate(90.0 1611 179.5)"/><rect x="1610.10" y="174.50" width="1.80" height="2.50" fill="#226aa6" transform="rotate(135.0 1611 179.5)"/><rect x="1610.10" y="174.50" width="1.80" height="2.50" fill="#226aa6" transform="rotate(180.0 1611 179.5)"/><rect x="1610.10" y="174.50" width="1.80" height="2.50" fill="#226aa6" transform="rotate(225.0 1611 179.5)"/><rect x="1610.10" y="174.50" width="1.80" height="2.50" fill="#226aa6" transform="rotate(270.0 1611 179.5)"/><rect x="1610.10" y="174.50" width="1.80" height="2.50" fill="#226aa6" transform="rotate(315.0 1611 179.5)"/><circle cx="1611" cy="179.5" r="1.6" fill="#dde7f2"/>
<circle cx="1621" cy="186" r="5.46" fill="#1f6aa8"/><rect x="1619.74" y="179.00" width="2.52" height="3.50" fill="#1f6aa8" transform="rotate(0.0 1621 186)"/><rect x="1619.74" y="179.00" width="2.52" height="3.50" fill="#1f6aa8" transform="rotate(40.0 1621 186)"/><rect x="1619.74" y="179.00" width="2.52" height="3.50" fill="#1f6aa8" transform="rotate(80.0 1621 186)"/><rect x="1619.74" y="179.00" width="2.52" height="3.50" fill="#1f6aa8" transform="rotate(120.0 1621 186)"/><rect x="1619.74" y="179.00" width="2.52" height="3.50" fill="#1f6aa8" transform="rotate(160.0 1621 186)"/><rect x="1619.74" y="179.00" width="2.52" height="3.50" fill="#1f6aa8" transform="rotate(200.0 1621 186)"/><rect x="1619.74" y="179.00" width="2.52" height="3.50" fill="#1f6aa8" transform="rotate(240.0 1621 186)"/><rect x="1619.74" y="179.00" width="2.52" height="3.50" fill="#1f6aa8" transform="rotate(280.0 1621 186)"/><rect x="1619.74" y="179.00" width="2.52" height="3.50" fill="#1f6aa8" transform="rotate(320.0 1621 186)"/><circle cx="1621" cy="186" r="2.2" fill="#dde7f2"/>
<rect x="161" y="740" width="591" height="135" fill="#f4f8fd" />
<line x1="161" y1="762.5" x2="752" y2="762.5" stroke="#8a8a8a" stroke-width="1"/><line x1="161" y1="785.0" x2="752" y2="785.0" stroke="#8a8a8a" stroke-width="1"/><line x1="161" y1="807.5" x2="752" y2="807.5" stroke="#8a8a8a" stroke-width="1"/><line x1="161" y1="830.0" x2="752" y2="830.0" stroke="#8a8a8a" stroke-width="1"/><line x1="161" y1="852.5" x2="752" y2="852.5" stroke="#8a8a8a" stroke-width="1"/><line x1="261.7" y1="740" x2="261.7" y2="875" stroke="#8a8a8a" stroke-width="1"/><line x1="362.4" y1="740" x2="362.4" y2="875" stroke="#8a8a8a" stroke-width="1"/><line x1="463.0" y1="740" x2="463.0" y2="875" stroke="#8a8a8a" stroke-width="1"/><line x1="563.7" y1="740" x2="563.7" y2="875" stroke="#8a8a8a" stroke-width="1"/><line x1="664.4" y1="740" x2="664.4" y2="875" stroke="#8a8a8a" stroke-width="1"/>
<line x1="161" y1="740.5" x2="752" y2="740.5" stroke="#808080" stroke-width="1" />
<line x1="751.5" y1="740" x2="751.5" y2="875" stroke="#808080" stroke-width="1" />
<polyline points="162.0,751.7 163.0,751.8 164.0,752.6 165.0,751.7 166.0,751.3 167.0,752.2 168.0,751.7 169.0,751.6 170.0,749.7 171.0,750.5 172.0,751.0 173.0,751.3 174.0,752.0 175.0,751.6 176.0,750.3 177.0,750.0 178.0,748.1 179.0,753.0 180.0,754.6 181.0,748.6 182.0,750.0 183.0,752.8 184.0,750.8 185.0,749.1 186.0,751.7 187.0,751.1 188.0,750.6 189.0,749.5 190.0,752.8 191.0,750.5 192.0,751.4 193.0,750.8 194.0,751.7 195.0,751.5 196.0,751.0 197.0,750.6 198.0,751.7 199.0,751.2 200.0,749.2 201.0,751.5 202.0,751.5 203.0,750.1 204.0,750.4 205.0,751.1 206.0,748.7 207.0,749.6 208.0,750.1 209.0,750.9 210.0,751.0 211.0,749.3 212.0,750.4 213.0,807.5 214.0,835.4 214.0,835.2 215.0,836.3 216.0,835.0 217.0,835.4 218.0,835.8 219.0,836.1 220.0,834.5 221.0,835.9 222.0,835.5 223.0,834.4 224.0,835.0 225.0,835.2 226.0,835.7 227.0,834.8 228.0,835.9 229.0,836.7 230.0,835.7 231.0,835.1 232.0,835.4 233.0,839.1 234.0,835.9 235.0,835.2 236.0,835.8 237.0,836.0 238.0,835.8 239.0,835.7 240.0,835.8 241.0,835.2 242.0,834.8 243.0,836.4 244.0,836.2 245.0,834.4 246.0,833.4 247.0,836.2 248.0,834.7 249.0,835.0 250.0,837.1 251.0,832.0 252.0,835.3 253.0,836.5 254.0,835.1 255.0,835.6 256.0,836.1 257.0,835.1 258.0,835.4 259.0,836.0 260.0,835.5 261.0,834.6 262.0,834.6 263.0,835.5 264.0,836.0 265.0,836.7 266.0,835.8 267.0,835.1 268.0,834.9 269.0,837.7 270.0,837.5 271.0,834.5 272.0,835.0 273.0,835.1 274.0,835.8 275.0,834.7 276.0,834.7 277.0,836.9 278.0,836.5 279.0,834.8 280.0,835.4 281.0,834.1 282.0,838.0 283.0,831.9 284.0,836.2 285.0,836.5 286.0,835.2 287.0,836.3 288.0,835.7 289.0,835.8 290.0,836.3 291.0,835.3 292.0,835.2 293.0,836.5 294.0,837.7 295.0,835.6 296.0,835.5 297.0,837.9 298.0,835.3 299.0,834.9 300.0,837.4 301.0,836.7 302.0,836.8 303.0,834.9 304.0,834.3 305.0,840.4 306.0,834.9 307.0,834.5 308.0,836.7 309.0,836.0 310.0,836.6 311.0,835.5 312.0,836.6 313.0,835.6 314.0,838.2 315.0,835.0 316.0,835.9 317.0,832.7 318.0,835.7 319.0,835.9 320.0,836.1 321.0,836.1 322.0,836.7 323.0,836.8 324.0,837.5 325.0,837.7 326.0,838.0 327.0,833.7 328.0,835.9 329.0,836.0 330.0,839.3 331.0,836.4 332.0,837.1 333.0,836.4 334.0,835.2 335.0,837.0 336.0,838.0 337.0,835.1 338.0,836.5 339.0,833.4 340.0,836.6 341.0,837.4 342.0,836.3 343.0,839.0 344.0,837.0 345.0,835.6 346.0,836.6 347.0,837.0 348.0,836.7 349.0,836.9 350.0,837.3 351.0,835.2 352.0,836.4 353.0,836.0 354.0,839.6 355.0,837.5 356.0,836.2 357.0,836.9 358.0,836.9 359.0,835.4 360.0,835.1 361.0,835.8 362.0,835.9 363.0,835.6 364.0,836.6 365.0,836.7 366.0,837.3 367.0,837.7 368.0,835.8 369.0,837.0 370.0,836.9 371.0,835.8 372.0,836.7 373.0,835.3 374.0,836.7 375.0,836.2 376.0,838.5 377.0,835.5 378.0,837.0 379.0,836.5 380.0,836.5 381.0,836.3 382.0,835.9 383.0,836.2 384.0,836.7 385.0,835.9 386.0,837.5 387.0,837.6 388.0,836.2 389.0,835.0 390.0,836.6 391.0,836.3 392.0,837.4 393.0,836.0 394.0,836.2 395.0,836.8 396.0,838.4 397.0,837.3 398.0,835.3 399.0,835.9 400.0,838.2 401.0,834.0 402.0,835.4 403.0,837.0 404.0,836.4 405.0,836.3 406.0,836.6 407.0,836.7 408.0,838.3 409.0,837.0 410.0,837.2 411.0,836.0 412.0,836.7 413.0,836.7 414.0,836.4 415.0,835.8 416.0,837.4 417.0,835.3 418.0,836.4 419.0,839.5 420.0,836.9 421.0,836.2 422.0,837.6 423.0,836.9 424.0,837.0 425.0,837.2 426.0,837.0 427.0,837.3 428.0,837.6 429.0,836.3 430.0,836.4 431.0,835.6 432.0,836.8 433.0,837.1 434.0,837.9 435.0,836.4 436.0,836.4 437.0,836.7 438.0,836.2 439.0,836.8 440.0,780.5 441.0,750.4 441.0,751.1 442.0,750.7 443.0,749.2 444.0,751.3 445.0,751.7 446.0,750.9 447.0,751.5 448.0,753.3 449.0,752.0 450.0,751.6 451.0,752.1 452.0,750.8 453.0,751.4 454.0,750.7 455.0,750.8 456.0,752.0 457.0,750.4 458.0,753.6 459.0,748.8 460.0,751.1 461.0,750.3 462.0,751.3 463.0,751.0 464.0,750.6 465.0,751.2 466.0,750.9 467.0,750.6 468.0,750.6 469.0,749.8 470.0,750.8 471.0,751.5 472.0,750.5 473.0,751.0 474.0,749.7 475.0,751.0 476.0,750.6 477.0,751.5 478.0,752.1 479.0,750.4 480.0,750.2 481.0,750.3 482.0,750.2 483.0,753.5 484.0,749.7 485.0,750.6 486.0,749.7 487.0,750.2 488.0,750.4 489.0,750.9 490.0,750.4 491.0,803.0 492.0,835.4 492.0,835.4 493.0,835.9 494.0,836.0 495.0,839.8 496.0,837.3 497.0,835.7 498.0,835.2 499.0,835.7 500.0,834.0 501.0,836.6 502.0,836.3 503.0,835.9 504.0,836.4 505.0,835.3 506.0,836.5 507.0,836.4 508.0,836.5 509.0,835.3 510.0,836.4 511.0,837.3 512.0,836.1 513.0,836.1 514.0,836.0 515.0,835.0 516.0,834.8 517.0,838.6 518.0,835.5 519.0,835.6 520.0,836.2 521.0,835.7 522.0,830.0 523.5,812.0 524.5,830.0 526.0,833.2 527.0,837.6 528.0,835.3 529.0,836.0 530.0,837.1 531.0,835.1 532.0,834.5 533.0,836.2 534.0,835.8 535.0,836.0 536.0,835.9 537.0,835.8 538.0,836.2 539.0,835.7 540.0,836.1 541.0,837.2 542.0,835.3 543.0,837.1 544.0,837.5 545.0,837.5 546.0,836.5 547.0,837.1 548.0,837.0 549.0,837.6 550.0,834.8 551.0,837.1 552.0,836.1 553.0,837.4 554.0,836.1 555.0,838.0 556.0,838.3 557.0,836.8 558.0,836.3 559.0,837.0 560.0,836.2 561.0,835.6 562.0,835.5 563.0,837.1 564.0,836.2 565.0,837.8 566.0,836.1 567.0,837.2 568.0,836.1 569.0,837.1 570.0,836.5 571.0,839.1 572.0,835.9 573.0,837.1 574.0,835.9 575.0,835.7 576.0,836.7 577.0,836.5 578.0,835.9 579.0,835.0 580.0,836.5 581.0,836.0 582.0,835.9 583.0,837.0 584.0,836.2 585.0,835.9 586.0,835.9 587.0,836.8 588.0,836.3 589.0,837.6 590.0,836.7 591.0,836.5 592.0,836.6 593.0,835.6 594.0,837.6 595.0,838.7 596.0,836.8 597.0,837.0 598.0,837.5 599.0,836.2 600.0,836.8 601.0,836.0 602.0,832.8 603.0,837.2 604.0,836.7 605.0,836.8 606.0,836.1 607.0,836.2 608.0,836.1 609.0,835.8 610.0,836.8 611.0,836.7 612.0,836.0 613.0,835.1 614.0,836.2 615.0,835.8 616.0,834.1 617.0,835.4 618.0,836.3 619.0,837.8 620.0,837.0 621.0,837.9 622.0,838.1 623.0,837.4 624.0,836.2 625.0,836.0 626.0,836.8 627.0,834.7 628.0,835.4 629.0,837.0 630.0,837.0 631.0,835.1 632.0,836.1 633.0,837.1 634.0,837.4 635.0,835.5 636.0,835.8 637.0,837.3 638.0,833.4 639.0,835.4 640.0,837.8 641.0,836.7 642.0,837.0 643.0,836.1 644.0,837.1 645.0,835.8 646.0,835.4 647.0,836.5 648.0,836.3 649.0,839.6 650.0,836.9 651.0,838.1 652.0,836.4 653.0,836.5 654.0,837.7 655.0,837.8 656.0,835.7 657.0,837.4 658.0,836.7 659.0,837.6 660.0,837.9 661.0,837.1 662.0,833.9 663.0,838.9 664.0,836.2 665.0,837.9 666.0,837.5 667.0,837.2 668.0,836.7 669.0,837.4 670.0,838.7 671.0,837.0 672.0,836.5 673.0,838.0 674.0,837.3 675.0,838.2 676.0,836.0 677.0,836.6 678.0,836.9 679.0,836.5 680.0,835.6 681.0,837.2 682.0,835.7 683.0,838.9 684.0,837.9 685.0,836.7 686.0,837.2 687.0,837.2 688.0,837.7 689.0,837.0 690.0,837.6 691.0,837.2 692.0,837.5 693.0,835.0 694.0,837.0 695.0,836.6 696.0,838.5 697.0,835.7 698.0,836.5 699.0,836.6 700.0,835.4 701.0,838.5 702.0,835.7 703.0,835.1 704.0,839.0 705.0,836.3 706.0,836.7 707.0,836.1 708.0,837.1 709.0,840.0 710.0,836.8 711.0,838.4 712.0,837.1 713.0,838.7 714.0,835.9 715.0,834.5 716.0,837.2 717.0,837.1 718.0,837.6 719.0,836.8 720.0,753.5 720.0,751.2 721.0,752.6 722.0,755.3 723.0,748.9 724.0,752.0 725.0,752.2 726.0,750.2 727.0,751.9 728.0,751.7 729.0,750.1 730.0,753.3 731.0,752.1 732.0,751.4 733.0,751.8 734.0,752.6 735.0,753.9 736.0,752.8 737.0,752.1 738.0,753.4 739.0,755.7 740.0,754.1 741.0,751.6 742.0,750.4 743.0,754.0 744.0,752.7 745.0,753.6 746.0,753.9 747.0,753.7 748.0,754.3 749.0,755.1 750.0,753.9 751.0,753.3" fill="none" stroke="#1a1ad0" stroke-width="1.1"/>
<rect x="160" y="739" width="2" height="137" fill="#7a0a0a" />
<line x1="157" y1="875.0" x2="160" y2="875.0" stroke="#000" stroke-width="0.8"/><line x1="157" y1="870.5" x2="160" y2="870.5" stroke="#000" stroke-width="0.8"/><line x1="157" y1="866.0" x2="160" y2="866.0" stroke="#000" stroke-width="0.8"/><line x1="157" y1="861.5" x2="160" y2="861.5" stroke="#000" stroke-width="0.8"/><line x1="157" y1="857.0" x2="160" y2="857.0" stroke="#000" stroke-width="0.8"/><line x1="157" y1="852.5" x2="160" y2="852.5" stroke="#000" stroke-width="0.8"/><line x1="157" y1="848.0" x2="160" y2="848.0" stroke="#000" stroke-width="0.8"/><line x1="157" y1="843.5" x2="160" y2="843.5" stroke="#000" stroke-width="0.8"/><line x1="157" y1="839.0" x2="160" y2="839.0" stroke="#000" stroke-width="0.8"/><line x1="157" y1="834.5" x2="160" y2="834.5" stroke="#000" stroke-width="0.8"/><line x1="157" y1="830.0" x2="160" y2="830.0" stroke="#000" stroke-width="0.8"/><line x1="157" y1="825.5" x2="160" y2="825.5" stroke="#000" stroke-width="0.8"/><line x1="157" y1="821.0" x2="160" y2="821.0" stroke="#000" stroke-width="0.8"/><line x1="157" y1="816.5" x2="160" y2="816.5" stroke="#000" stroke-width="0.8"/><line x1="157" y1="812.0" x2="160" y2="812.0" stroke="#000" stroke-width="0.8"/><line x1="157" y1="807.5" x2="160" y2="807.5" stroke="#000" stroke-width="0.8"/><line x1="157" y1="803.0" x2="160" y2="803.0" stroke="#000" stroke-width="0.8"/><line x1="157" y1="798.5" x2="160" y2="798.5" stroke="#000" stroke-width="0.8"/><line x1="157" y1="794.0" x2="160" y2="794.0" stroke="#000" stroke-width="0.8"/><line x1="157" y1="789.5" x2="160" y2="789.5" stroke="#000" stroke-width="0.8"/><line x1="157" y1="785.0" x2="160" y2="785.0" stroke="#000" stroke-width="0.8"/><line x1="157" y1="780.5" x2="160" y2="780.5" stroke="#000" stroke-width="0.8"/><line x1="157" y1="776.0" x2="160" y2="776.0" stroke="#000" stroke-width="0.8"/><line x1="157" y1="771.5" x2="160" y2="771.5" stroke="#000" stroke-width="0.8"/><line x1="157" y1="767.0" x2="160" y2="767.0" stroke="#000" stroke-width="0.8"/><line x1="157" y1="762.5" x2="160" y2="762.5" stroke="#000" stroke-width="0.8"/><line x1="157" y1="758.0" x2="160" y2="758.0" stroke="#000" stroke-width="0.8"/><line x1="157" y1="753.5" x2="160" y2="753.5" stroke="#000" stroke-width="0.8"/><line x1="157" y1="749.0" x2="160" y2="749.0" stroke="#000" stroke-width="0.8"/><line x1="157" y1="744.5" x2="160" y2="744.5" stroke="#000" stroke-width="0.8"/><line x1="157" y1="740.0" x2="160" y2="740.0" stroke="#000" stroke-width="0.8"/><line x1="154" y1="740.0" x2="160" y2="740.0" stroke="#000" stroke-width="1"/><line x1="154" y1="762.5" x2="160" y2="762.5" stroke="#000" stroke-width="1"/><line x1="154" y1="785.0" x2="160" y2="785.0" stroke="#000" stroke-width="1"/><line x1="154" y1="807.5" x2="160" y2="807.5" stroke="#000" stroke-width="1"/><line x1="154" y1="830.0" x2="160" y2="830.0" stroke="#000" stroke-width="1"/><line x1="154" y1="852.5" x2="160" y2="852.5" stroke="#000" stroke-width="1"/><line x1="154" y1="875.0" x2="160" y2="875.0" stroke="#000" stroke-width="1"/>
<rect x="160" y="874" width="592" height="2" fill="#000" />
<line x1="161.0" y1="875" x2="161.0" y2="878" stroke="#000" stroke-width="1"/><line x1="181.1" y1="875" x2="181.1" y2="878" stroke="#000" stroke-width="1"/><line x1="201.3" y1="875" x2="201.3" y2="878" stroke="#000" stroke-width="1"/><line x1="221.4" y1="875" x2="221.4" y2="878" stroke="#000" stroke-width="1"/><line x1="241.6" y1="875" x2="241.6" y2="878" stroke="#000" stroke-width="1"/><line x1="261.7" y1="875" x2="261.7" y2="878" stroke="#000" stroke-width="1"/><line x1="281.8" y1="875" x2="281.8" y2="878" stroke="#000" stroke-width="1"/><line x1="302.0" y1="875" x2="302.0" y2="878" stroke="#000" stroke-width="1"/><line x1="322.1" y1="875" x2="322.1" y2="878" stroke="#000" stroke-width="1"/><line x1="342.3" y1="875" x2="342.3" y2="878" stroke="#000" stroke-width="1"/><line x1="362.4" y1="875" x2="362.4" y2="878" stroke="#000" stroke-width="1"/><line x1="382.5" y1="875" x2="382.5" y2="878" stroke="#000" stroke-width="1"/><line x1="402.7" y1="875" x2="402.7" y2="878" stroke="#000" stroke-width="1"/><line x1="422.8" y1="875" x2="422.8" y2="878" stroke="#000" stroke-width="1"/><line x1="443.0" y1="875" x2="443.0" y2="878" stroke="#000" stroke-width="1"/><line x1="463.1" y1="875" x2="463.1" y2="878" stroke="#000" stroke-width="1"/><line x1="483.2" y1="875" x2="483.2" y2="878" stroke="#000" stroke-width="1"/><line x1="503.4" y1="875" x2="503.4" y2="878" stroke="#000" stroke-width="1"/><line x1="523.5" y1="875" x2="523.5" y2="878" stroke="#000" stroke-width="1"/><line x1="543.7" y1="875" x2="543.7" y2="878" stroke="#000" stroke-width="1"/><line x1="563.8" y1="875" x2="563.8" y2="878" stroke="#000" stroke-width="1"/><line x1="583.9" y1="875" x2="583.9" y2="878" stroke="#000" stroke-width="1"/><line x1="604.1" y1="875" x2="604.1" y2="878" stroke="#000" stroke-width="1"/><line x1="624.2" y1="875" x2="624.2" y2="878" stroke="#000" stroke-width="1"/><line x1="644.4" y1="875" x2="644.4" y2="878" stroke="#000" stroke-width="1"/><line x1="664.5" y1="875" x2="664.5" y2="878" stroke="#000" stroke-width="1"/><line x1="684.6" y1="875" x2="684.6" y2="878" stroke="#000" stroke-width="1"/><line x1="704.8" y1="875" x2="704.8" y2="878" stroke="#000" stroke-width="1"/><line x1="724.9" y1="875" x2="724.9" y2="878" stroke="#000" stroke-width="1"/><line x1="745.1" y1="875" x2="745.1" y2="878" stroke="#000" stroke-width="1"/><line x1="161.0" y1="875" x2="161.0" y2="881" stroke="#000" stroke-width="1"/><line x1="261.7" y1="875" x2="261.7" y2="881" stroke="#000" stroke-width="1"/><line x1="362.4" y1="875" x2="362.4" y2="881" stroke="#000" stroke-width="1"/><line x1="463.0" y1="875" x2="463.0" y2="881" stroke="#000" stroke-width="1"/><line x1="563.7" y1="875" x2="563.7" y2="881" stroke="#000" stroke-width="1"/><line x1="664.4" y1="875" x2="664.4" y2="881" stroke="#000" stroke-width="1"/><line x1="752.0" y1="875" x2="752.0" y2="881" stroke="#000" stroke-width="1"/>
<text x="153" y="745.0" font-size="14" fill="#111" text-anchor="end" >0</text>
<text x="153" y="767.5" font-size="14" fill="#111" text-anchor="end" >-500</text>
<text x="153" y="790.0" font-size="14" fill="#111" text-anchor="end" >-1000</text>
<text x="153" y="812.5" font-size="14" fill="#111" text-anchor="end" >-1500</text>
<text x="153" y="835.0" font-size="14" fill="#111" text-anchor="end" >-2000</text>
<text x="153" y="857.5" font-size="14" fill="#111" text-anchor="end" >-2500</text>
<text x="153" y="880.0" font-size="14" fill="#111" text-anchor="end" >-3000</text>
<text x="161" y="897" font-size="14" fill="#111" text-anchor="middle" >0.0</text>
<text x="261.7" y="897" font-size="14" fill="#111" text-anchor="middle" >0.2</text>
<text x="362.4" y="897" font-size="14" fill="#111" text-anchor="middle" >0.4</text>
<text x="463.0" y="897" font-size="14" fill="#111" text-anchor="middle" >0.6</text>
<text x="563.7" y="897" font-size="14" fill="#111" text-anchor="middle" >0.8</text>
<text x="664.4" y="897" font-size="14" fill="#111" text-anchor="middle" >1.0</text>
<text x="752" y="897" font-size="14" fill="#111" text-anchor="middle" >1.2</text>
<text x="456.5" y="918" font-size="14" fill="#111" text-anchor="middle" >mm</text>
<text x="0" y="0" font-size="14" fill="#222" text-anchor="middle" transform="translate(104,807) rotate(-90)">Å</text>
<text x="431" y="696" font-size="14" fill="#111" text-anchor="middle"><tspan font-weight="bold">X Profile</tspan>: ΔX=1.1740 mm; ΔZ= -&#160; Å</text>
<text x="161" y="730" font-size="13" fill="#d01010" font-weight="bold" text-anchor="middle" >R</text>
<text x="753" y="717" font-size="13" font-weight="bold" fill="#2a7a10">M</text><path d="M766,712.5 H776 M772.5,709 L776.5,712.5 L772.5,716" fill="none" stroke="#2a7a10" stroke-width="1.4"/>
<rect x="885" y="739.7" width="591" height="136.0999999999999" fill="#f4f8fd" />
<line x1="885" y1="756.7" x2="1476" y2="756.7" stroke="#8a8a8a" stroke-width="1"/><line x1="885" y1="773.7" x2="1476" y2="773.7" stroke="#8a8a8a" stroke-width="1"/><line x1="885" y1="790.7" x2="1476" y2="790.7" stroke="#8a8a8a" stroke-width="1"/><line x1="885" y1="807.8" x2="1476" y2="807.8" stroke="#8a8a8a" stroke-width="1"/><line x1="885" y1="824.8" x2="1476" y2="824.8" stroke="#8a8a8a" stroke-width="1"/><line x1="885" y1="841.8" x2="1476" y2="841.8" stroke="#8a8a8a" stroke-width="1"/><line x1="885" y1="858.8" x2="1476" y2="858.8" stroke="#8a8a8a" stroke-width="1"/><line x1="983.5" y1="739.7" x2="983.5" y2="875.8" stroke="#8a8a8a" stroke-width="1"/><line x1="1082.0" y1="739.7" x2="1082.0" y2="875.8" stroke="#8a8a8a" stroke-width="1"/><line x1="1180.5" y1="739.7" x2="1180.5" y2="875.8" stroke="#8a8a8a" stroke-width="1"/><line x1="1279.0" y1="739.7" x2="1279.0" y2="875.8" stroke="#8a8a8a" stroke-width="1"/><line x1="1377.5" y1="739.7" x2="1377.5" y2="875.8" stroke="#8a8a8a" stroke-width="1"/>
<line x1="885" y1="740.2" x2="1476" y2="740.2" stroke="#808080" stroke-width="1" />
<line x1="1475.5" y1="739.7" x2="1475.5" y2="875.8" stroke="#808080" stroke-width="1" />
<polyline points="886.0,772.3 897.2,772.8 908.3,773.2 919.5,773.7 930.7,774.2 941.8,774.6 953.0,775.1 955.0,780.5 956.5,807.7 958.0,831.5 961.0,837.6 962.0,837.6 985.4,838.2 1008.8,838.8 1032.2,839.5 1055.6,840.1 1079.0,840.7 1102.4,841.3 1125.8,841.9 1149.2,842.5 1172.6,843.1 1196.0,843.7 1198.0,838.3 1199.0,807.7 1201.0,787.3 1204.0,781.9 1205.0,781.9 1224.3,782.1 1243.6,782.2 1262.9,782.4 1282.1,782.6 1301.4,782.8 1320.7,783.0 1340.0,783.2 1359.3,783.4 1378.6,783.6 1397.9,783.8 1417.1,784.0 1436.4,784.2 1455.7,784.4 1475.0,784.6" fill="none" stroke="#1a1ad0" stroke-width="1.1"/>
<rect x="884" y="738.7" width="2" height="138.0999999999999" fill="#7a0a0a" />
<line x1="881" y1="875.8" x2="884" y2="875.8" stroke="#000" stroke-width="0.8"/><line x1="881" y1="872.4" x2="884" y2="872.4" stroke="#000" stroke-width="0.8"/><line x1="881" y1="869.0" x2="884" y2="869.0" stroke="#000" stroke-width="0.8"/><line x1="881" y1="865.6" x2="884" y2="865.6" stroke="#000" stroke-width="0.8"/><line x1="881" y1="862.2" x2="884" y2="862.2" stroke="#000" stroke-width="0.8"/><line x1="881" y1="858.8" x2="884" y2="858.8" stroke="#000" stroke-width="0.8"/><line x1="881" y1="855.4" x2="884" y2="855.4" stroke="#000" stroke-width="0.8"/><line x1="881" y1="852.0" x2="884" y2="852.0" stroke="#000" stroke-width="0.8"/><line x1="881" y1="848.6" x2="884" y2="848.6" stroke="#000" stroke-width="0.8"/><line x1="881" y1="845.2" x2="884" y2="845.2" stroke="#000" stroke-width="0.8"/><line x1="881" y1="841.8" x2="884" y2="841.8" stroke="#000" stroke-width="0.8"/><line x1="881" y1="838.4" x2="884" y2="838.4" stroke="#000" stroke-width="0.8"/><line x1="881" y1="835.0" x2="884" y2="835.0" stroke="#000" stroke-width="0.8"/><line x1="881" y1="831.6" x2="884" y2="831.6" stroke="#000" stroke-width="0.8"/><line x1="881" y1="828.2" x2="884" y2="828.2" stroke="#000" stroke-width="0.8"/><line x1="881" y1="824.8" x2="884" y2="824.8" stroke="#000" stroke-width="0.8"/><line x1="881" y1="821.4" x2="884" y2="821.4" stroke="#000" stroke-width="0.8"/><line x1="881" y1="818.0" x2="884" y2="818.0" stroke="#000" stroke-width="0.8"/><line x1="881" y1="814.6" x2="884" y2="814.6" stroke="#000" stroke-width="0.8"/><line x1="881" y1="811.2" x2="884" y2="811.2" stroke="#000" stroke-width="0.8"/><line x1="881" y1="807.8" x2="884" y2="807.8" stroke="#000" stroke-width="0.8"/><line x1="881" y1="804.4" x2="884" y2="804.4" stroke="#000" stroke-width="0.8"/><line x1="881" y1="801.0" x2="884" y2="801.0" stroke="#000" stroke-width="0.8"/><line x1="881" y1="797.6" x2="884" y2="797.6" stroke="#000" stroke-width="0.8"/><line x1="881" y1="794.2" x2="884" y2="794.2" stroke="#000" stroke-width="0.8"/><line x1="881" y1="790.8" x2="884" y2="790.8" stroke="#000" stroke-width="0.8"/><line x1="881" y1="787.4" x2="884" y2="787.4" stroke="#000" stroke-width="0.8"/><line x1="881" y1="784.0" x2="884" y2="784.0" stroke="#000" stroke-width="0.8"/><line x1="881" y1="780.6" x2="884" y2="780.6" stroke="#000" stroke-width="0.8"/><line x1="881" y1="777.2" x2="884" y2="777.2" stroke="#000" stroke-width="0.8"/><line x1="881" y1="773.8" x2="884" y2="773.8" stroke="#000" stroke-width="0.8"/><line x1="881" y1="770.4" x2="884" y2="770.4" stroke="#000" stroke-width="0.8"/><line x1="881" y1="767.0" x2="884" y2="767.0" stroke="#000" stroke-width="0.8"/><line x1="881" y1="763.6" x2="884" y2="763.6" stroke="#000" stroke-width="0.8"/><line x1="881" y1="760.2" x2="884" y2="760.2" stroke="#000" stroke-width="0.8"/><line x1="881" y1="756.8" x2="884" y2="756.8" stroke="#000" stroke-width="0.8"/><line x1="881" y1="753.4" x2="884" y2="753.4" stroke="#000" stroke-width="0.8"/><line x1="881" y1="750.0" x2="884" y2="750.0" stroke="#000" stroke-width="0.8"/><line x1="881" y1="746.6" x2="884" y2="746.6" stroke="#000" stroke-width="0.8"/><line x1="881" y1="743.2" x2="884" y2="743.2" stroke="#000" stroke-width="0.8"/><line x1="881" y1="739.8" x2="884" y2="739.8" stroke="#000" stroke-width="0.8"/><line x1="878" y1="739.7" x2="884" y2="739.7" stroke="#000" stroke-width="1"/><line x1="878" y1="756.7" x2="884" y2="756.7" stroke="#000" stroke-width="1"/><line x1="878" y1="773.7" x2="884" y2="773.7" stroke="#000" stroke-width="1"/><line x1="878" y1="790.7" x2="884" y2="790.7" stroke="#000" stroke-width="1"/><line x1="878" y1="807.8" x2="884" y2="807.8" stroke="#000" stroke-width="1"/><line x1="878" y1="824.8" x2="884" y2="824.8" stroke="#000" stroke-width="1"/><line x1="878" y1="841.8" x2="884" y2="841.8" stroke="#000" stroke-width="1"/><line x1="878" y1="858.8" x2="884" y2="858.8" stroke="#000" stroke-width="1"/><line x1="878" y1="875.8" x2="884" y2="875.8" stroke="#000" stroke-width="1"/>
<rect x="884" y="874.8" width="592" height="2" fill="#000" />
<line x1="885.0" y1="875.8" x2="885.0" y2="878.8" stroke="#000" stroke-width="1"/><line x1="904.7" y1="875.8" x2="904.7" y2="878.8" stroke="#000" stroke-width="1"/><line x1="924.4" y1="875.8" x2="924.4" y2="878.8" stroke="#000" stroke-width="1"/><line x1="944.1" y1="875.8" x2="944.1" y2="878.8" stroke="#000" stroke-width="1"/><line x1="963.8" y1="875.8" x2="963.8" y2="878.8" stroke="#000" stroke-width="1"/><line x1="983.5" y1="875.8" x2="983.5" y2="878.8" stroke="#000" stroke-width="1"/><line x1="1003.2" y1="875.8" x2="1003.2" y2="878.8" stroke="#000" stroke-width="1"/><line x1="1022.9" y1="875.8" x2="1022.9" y2="878.8" stroke="#000" stroke-width="1"/><line x1="1042.6" y1="875.8" x2="1042.6" y2="878.8" stroke="#000" stroke-width="1"/><line x1="1062.3" y1="875.8" x2="1062.3" y2="878.8" stroke="#000" stroke-width="1"/><line x1="1082.0" y1="875.8" x2="1082.0" y2="878.8" stroke="#000" stroke-width="1"/><line x1="1101.7" y1="875.8" x2="1101.7" y2="878.8" stroke="#000" stroke-width="1"/><line x1="1121.4" y1="875.8" x2="1121.4" y2="878.8" stroke="#000" stroke-width="1"/><line x1="1141.1" y1="875.8" x2="1141.1" y2="878.8" stroke="#000" stroke-width="1"/><line x1="1160.8" y1="875.8" x2="1160.8" y2="878.8" stroke="#000" stroke-width="1"/><line x1="1180.5" y1="875.8" x2="1180.5" y2="878.8" stroke="#000" stroke-width="1"/><line x1="1200.2" y1="875.8" x2="1200.2" y2="878.8" stroke="#000" stroke-width="1"/><line x1="1219.9" y1="875.8" x2="1219.9" y2="878.8" stroke="#000" stroke-width="1"/><line x1="1239.6" y1="875.8" x2="1239.6" y2="878.8" stroke="#000" stroke-width="1"/><line x1="1259.3" y1="875.8" x2="1259.3" y2="878.8" stroke="#000" stroke-width="1"/><line x1="1279.0" y1="875.8" x2="1279.0" y2="878.8" stroke="#000" stroke-width="1"/><line x1="1298.7" y1="875.8" x2="1298.7" y2="878.8" stroke="#000" stroke-width="1"/><line x1="1318.4" y1="875.8" x2="1318.4" y2="878.8" stroke="#000" stroke-width="1"/><line x1="1338.1" y1="875.8" x2="1338.1" y2="878.8" stroke="#000" stroke-width="1"/><line x1="1357.8" y1="875.8" x2="1357.8" y2="878.8" stroke="#000" stroke-width="1"/><line x1="1377.5" y1="875.8" x2="1377.5" y2="878.8" stroke="#000" stroke-width="1"/><line x1="1397.2" y1="875.8" x2="1397.2" y2="878.8" stroke="#000" stroke-width="1"/><line x1="1416.9" y1="875.8" x2="1416.9" y2="878.8" stroke="#000" stroke-width="1"/><line x1="1436.6" y1="875.8" x2="1436.6" y2="878.8" stroke="#000" stroke-width="1"/><line x1="1456.3" y1="875.8" x2="1456.3" y2="878.8" stroke="#000" stroke-width="1"/><line x1="1476.0" y1="875.8" x2="1476.0" y2="878.8" stroke="#000" stroke-width="1"/><line x1="885.0" y1="875.8" x2="885.0" y2="881.8" stroke="#000" stroke-width="1"/><line x1="983.5" y1="875.8" x2="983.5" y2="881.8" stroke="#000" stroke-width="1"/><line x1="1082.0" y1="875.8" x2="1082.0" y2="881.8" stroke="#000" stroke-width="1"/><line x1="1180.5" y1="875.8" x2="1180.5" y2="881.8" stroke="#000" stroke-width="1"/><line x1="1279.0" y1="875.8" x2="1279.0" y2="881.8" stroke="#000" stroke-width="1"/><line x1="1377.5" y1="875.8" x2="1377.5" y2="881.8" stroke="#000" stroke-width="1"/><line x1="1476.0" y1="875.8" x2="1476.0" y2="881.8" stroke="#000" stroke-width="1"/>
<text x="877" y="744.7" font-size="14" fill="#111" text-anchor="end" >1000</text>
<text x="877" y="761.7125000000001" font-size="14" fill="#111" text-anchor="end" >500</text>
<text x="877" y="778.725" font-size="14" fill="#111" text-anchor="end" >0</text>
<text x="877" y="795.7375" font-size="14" fill="#111" text-anchor="end" >-500</text>
<text x="877" y="812.75" font-size="14" fill="#111" text-anchor="end" >-1000</text>
<text x="877" y="829.7625" font-size="14" fill="#111" text-anchor="end" >-1500</text>
<text x="877" y="846.775" font-size="14" fill="#111" text-anchor="end" >-2000</text>
<text x="877" y="863.7874999999999" font-size="14" fill="#111" text-anchor="end" >-2500</text>
<text x="877" y="880.8" font-size="14" fill="#111" text-anchor="end" >-3000</text>
<text x="885" y="897" font-size="14" fill="#111" text-anchor="middle" >0.00</text>
<text x="983.5" y="897" font-size="14" fill="#111" text-anchor="middle" >0.05</text>
<text x="1082" y="897" font-size="14" fill="#111" text-anchor="middle" >0.10</text>
<text x="1180.5" y="897" font-size="14" fill="#111" text-anchor="middle" >0.15</text>
<text x="1279" y="897" font-size="14" fill="#111" text-anchor="middle" >0.20</text>
<text x="1377.5" y="897" font-size="14" fill="#111" text-anchor="middle" >0.25</text>
<text x="1476" y="897" font-size="14" fill="#111" text-anchor="middle" >0.30</text>
<text x="1180.5" y="918" font-size="14" fill="#111" text-anchor="middle" >mm</text>
<text x="0" y="0" font-size="14" fill="#222" text-anchor="middle" transform="translate(827,807) rotate(-90)">Å</text>
<text x="1154" y="696" font-size="14" fill="#111" text-anchor="middle"><tspan font-weight="bold">Y Profile</tspan>: ΔX=0.2998 mm; ΔZ=-380.2719 Å</text>
<text x="885" y="730" font-size="13" fill="#d01010" font-weight="bold" text-anchor="middle" >R</text>
<line x1="1475.5" y1="739.7" x2="1475.5" y2="875.8" stroke="#3a7a1a" stroke-width="1.2" />
<text x="1470" y="717" font-size="13" font-weight="bold" fill="#2a7a10">M</text>
<path d="M1644.5,551 V147.5 Q1644.5,144.5 1647.5,144.5 H1910.5 Q1913.5,144.5 1913.5,147.5 V551" fill="#fff" stroke="#1a1a1a"/>
<rect x="1645" y="145" width="268" height="20" fill="url(#gHdr)" />
<line x1="1645" y1="165.5" x2="1913" y2="165.5" stroke="#aebdd4" stroke-width="1" />
<text x="1650" y="160" font-size="12" fill="#000" font-weight="bold" letter-spacing="-0.1">Data Analyzer</text>
<line x1="1644" y1="550.5" x2="1914" y2="550.5" stroke="#a0a0a0" stroke-width="1" />
<path d="M1891,150 L1886,155 L1891,160" fill="none" stroke="#000" stroke-width="2"/>
<path d="M1897,150 L1907,160 M1907,150 L1897,160" stroke="#c8181c" stroke-width="2"/>
<rect x="1645" y="166" width="268" height="26" fill="url(#gTool)" />
<rect x="1645" y="191" width="268" height="2" fill="#6e6e6e" />
<rect x="1651" y="172" width="10" height="8" fill="#e8edf6" stroke="#6a80b0" stroke-width="0.8"/><rect x="1651" y="172" width="10" height="2" fill="#5a7ad0"/><rect x="1656" y="178" width="10" height="11" fill="#b0c0d8" stroke="#6a7a90" stroke-width="0.8"/><rect x="1662" y="172" width="5" height="5" fill="#60b050"/>
<path d="M1675,175 L1681,173 L1681,189 L1675,187Z" fill="#f0c030"/><rect x="1681" y="172" width="9" height="12" fill="#e8edf6" stroke="#6a80b0" stroke-width="0.8"/><rect x="1681" y="172" width="9" height="2" fill="#5a7ad0"/><rect x="1684" y="177" width="3" height="3" fill="#d04040"/>
<path d="M1699,177 A6,6 0 0 1 1710,176" fill="none" stroke="#e03838" stroke-width="3"/><path d="M1711,183 A6,6 0 0 1 1700,184" fill="none" stroke="#e03838" stroke-width="3"/><path d="M1708,172 L1713,178 L1706,178Z" fill="#e03838"/><path d="M1702,188 L1697,182 L1704,182Z" fill="#e03838"/>
<circle cx="1727" cy="178.5" r="7.5" fill="#2058c8" stroke="#103a90" stroke-width="0.8"/><rect x="1726" y="177" width="2.2" height="6" fill="#fff"/><circle cx="1727.1" cy="174.5" r="1.3" fill="#fff"/>
<text x="1801" y="183" font-size="12" fill="#111" text-anchor="middle" >Set As Default</text>
<defs><linearGradient id="gMini" x1="0" y1="0" x2="1" y2="0"><stop offset="0" stop-color="#e83010"/><stop offset="0.12" stop-color="#f08020"/><stop offset="0.25" stop-color="#70e060"/><stop offset="0.38" stop-color="#50c8c8"/><stop offset="0.55" stop-color="#3a78e0"/><stop offset="0.8" stop-color="#1a3ab8"/><stop offset="1" stop-color="#0a1890"/></linearGradient></defs>
<rect x="1754" y="211" width="50" height="12" fill="url(#gMini)" />
<path d="M1666.5,246.0 L1666.5,253.0 L1659.5,253.0Z" fill="#444"/>
<text x="1677" y="254" font-size="12" fill="#111" letter-spacing="-0.7">SHS#7_3D.OPDx</text>
<path d="M1685.5,265.5 L1685.5,272.5 L1678.5,272.5Z" fill="#444"/>
<text x="1696" y="273" font-size="12" fill="#111" letter-spacing="-0.17">Surface Height</text>
<path d="M1704.5,285.5 L1704.5,292.5 L1697.5,292.5Z" fill="#444"/>
<text x="1733" y="293" font-size="12" fill="#111" >Raw</text>
<rect x="1718" y="281" width="3" height="16" fill="#f0c040"/><rect x="1721" y="281" width="4" height="16" fill="#2a60c8"/>
<path d="M1723.5,305.5 L1723.5,312.5 L1716.5,312.5Z" fill="#444"/>
<text x="1752" y="313" font-size="12" fill="#111" letter-spacing="-0.2">Terms Removal (F-Operator)</text>
<path d="M1734,302 L1746,302 L1741.5,308 L1741.5,314 L1738.5,314 L1738.5,308Z" fill="#e4e4e4" stroke="#8a8a8a" stroke-width="1"/><ellipse cx="1740" cy="302.5" rx="6" ry="1.6" fill="#f8f8f8" stroke="#8a8a8a" stroke-width="0.8"/>
<rect x="1748" y="318" width="111" height="20" fill="#ececec" />
<path d="M1753,322 L1765,322 L1760.5,328 L1760.5,334 L1757.5,334 L1757.5,328Z" fill="#e4e4e4" stroke="#8a8a8a" stroke-width="1"/><ellipse cx="1759" cy="322.5" rx="6" ry="1.6" fill="#f8f8f8" stroke="#8a8a8a" stroke-width="0.8"/>
<text x="1771" y="333" font-size="12" fill="#111" font-weight="bold" letter-spacing="-0.3">Data Flattening</text>
<path d="M1644.5,1128 V560.5 Q1644.5,557.5 1647.5,557.5 H1910.5 Q1913.5,557.5 1913.5,560.5 V1128" fill="#fff" stroke="#1a1a1a"/>
<rect x="1645" y="558" width="268" height="20" fill="url(#gHdr)" />
<line x1="1645" y1="578.5" x2="1913" y2="578.5" stroke="#aebdd4" stroke-width="1" />
<text x="1650" y="573" font-size="12" fill="#000" font-weight="bold" letter-spacing="-0.1">Analysis Toolbox</text>
<line x1="1644" y1="1127.5" x2="1914" y2="1127.5" stroke="#1a1a1a" stroke-width="1" />
<path d="M1891,563 L1886,568 L1891,573" fill="none" stroke="#000" stroke-width="2"/>
<path d="M1897,563 L1907,573 M1907,563 L1897,573" stroke="#c8181c" stroke-width="2"/>
<rect x="1896" y="578" width="16" height="549" fill="#e9e9e9" />
<rect x="1896" y="750" width="16" height="362" fill="#c3c3c3" />
<path d="M1900,590 L1904,586 L1908,590" fill="none" stroke="#a8a8a8" stroke-width="1.2"/><path d="M1900,1117 L1904,1121 L1908,1117" fill="none" stroke="#a8a8a8" stroke-width="1.2"/>
<path d="M1652.5,578 V751 Q1652.5,754.5 1656,754.5 H1885 Q1888.5,754.5 1888.5,751 V578" fill="#fff" stroke="#8c8c8c"/>
<rect x="1659" y="575" width="11" height="16" rx="1" fill="#f0c870" stroke="#c8a060" stroke-width="0.6"/><rect x="1659" y="575" width="11" height="4" fill="#5878d0"/><g stroke="#d89830" stroke-width="0.8"><path d="M1660,582 H1669 M1660,585 H1669 M1660,588 H1669 M1663,580 V590 M1666,580 V590"/></g>
<text x="1677" y="588" font-size="12" fill="#111" >Slope X</text>
<rect x="1659" y="595" width="11" height="16" rx="1" fill="#f0c870" stroke="#c8a060" stroke-width="0.6"/><rect x="1659" y="595" width="11" height="4" fill="#5878d0"/><g stroke="#d89830" stroke-width="0.8"><path d="M1660,602 H1669 M1660,605 H1669 M1660,608 H1669 M1663,600 V610 M1666,600 V610"/></g>
<text x="1677" y="608" font-size="12" fill="#111" >Slope Y</text>
<rect x="1659" y="615" width="11" height="16" rx="1" fill="#f0c870" stroke="#c8a060" stroke-width="0.6"/><rect x="1659" y="615" width="11" height="4" fill="#5878d0"/><g stroke="#d89830" stroke-width="0.8"><path d="M1660,622 H1669 M1660,625 H1669 M1660,628 H1669 M1663,620 V630 M1666,620 V630"/></g>
<text x="1677" y="628" font-size="12" fill="#111" >Step Height</text>
<rect x="1659" y="635" width="11" height="16" rx="1" fill="#f0c870" stroke="#c8a060" stroke-width="0.6"/><rect x="1659" y="635" width="11" height="4" fill="#5878d0"/><g stroke="#d89830" stroke-width="0.8"><path d="M1660,642 H1669 M1660,645 H1669 M1660,648 H1669 M1663,640 V650 M1666,640 V650"/></g>
<text x="1677" y="648" font-size="12" fill="#111" >Stylus Analysis</text>
<rect x="1659" y="655" width="11" height="16" rx="1" fill="#f0c870" stroke="#c8a060" stroke-width="0.6"/><rect x="1659" y="655" width="11" height="4" fill="#5878d0"/><g stroke="#d89830" stroke-width="0.8"><path d="M1660,662 H1669 M1660,665 H1669 M1660,668 H1669 M1663,660 V670 M1666,660 V670"/></g>
<text x="1677" y="668" font-size="12" fill="#111" >Surface Area</text>
<rect x="1659" y="675" width="11" height="16" rx="1" fill="#f0c870" stroke="#c8a060" stroke-width="0.6"/><rect x="1659" y="675" width="11" height="4" fill="#5878d0"/><g stroke="#d89830" stroke-width="0.8"><path d="M1660,682 H1669 M1660,685 H1669 M1660,688 H1669 M1663,680 V690 M1666,680 V690"/></g>
<text x="1677" y="688" font-size="12" fill="#111" >Trace Analysis</text>
<rect x="1659" y="695" width="11" height="16" rx="1" fill="#f0c870" stroke="#c8a060" stroke-width="0.6"/><rect x="1659" y="695" width="11" height="4" fill="#5878d0"/><g stroke="#d89830" stroke-width="0.8"><path d="M1660,702 H1669 M1660,705 H1669 M1660,708 H1669 M1663,700 V710 M1666,700 V710"/></g>
<text x="1677" y="708" font-size="12" fill="#111" >V Parameters</text>
<rect x="1659" y="715" width="11" height="16" rx="1" fill="#f0c870" stroke="#c8a060" stroke-width="0.6"/><rect x="1659" y="715" width="11" height="4" fill="#5878d0"/><g stroke="#d89830" stroke-width="0.8"><path d="M1660,722 H1669 M1660,725 H1669 M1660,728 H1669 M1663,720 V730 M1666,720 V730"/></g>
<text x="1677" y="728" font-size="12" fill="#111" >Volume</text>
<rect x="1659" y="735" width="11" height="16" rx="1" fill="#f0c870" stroke="#c8a060" stroke-width="0.6"/><rect x="1659" y="735" width="11" height="4" fill="#5878d0"/><g stroke="#d89830" stroke-width="0.8"><path d="M1660,742 H1669 M1660,745 H1669 M1660,748 H1669 M1663,740 V750 M1666,740 V750"/></g>
<text x="1677" y="748" font-size="12" fill="#111" >XY Averaged PSD</text>
<rect x="1653" y="578" width="235" height="2" fill="#fff" />
<path d="M1652.5,781 V764 Q1652.5,761.5 1655,761.5 H1886 Q1888.5,761.5 1888.5,764 V781" fill="url(#gCat)" stroke="#8c9cb4"/>
<text x="1659" y="776" font-size="12" fill="#111" >3D Filter</text>
<path d="M1870,775 L1882,775 L1876,769Z" fill="#000"/>
<path d="M1652.5,781 V1064 Q1652.5,1067.5 1656,1067.5 H1885 Q1888.5,1067.5 1888.5,1064 V781" fill="#fff" stroke="#8c8c8c"/>
<path d="M1659,790 L1671,790 L1666.5,796 L1666.5,802 L1663.5,802 L1663.5,796Z" fill="#e4e4e4" stroke="#8a8a8a" stroke-width="1"/><ellipse cx="1665" cy="790.5" rx="6" ry="1.6" fill="#f8f8f8" stroke="#8a8a8a" stroke-width="0.8"/>
<text x="1677" y="801" font-size="12" fill="#111" letter-spacing="-0.1">Data Fill</text>
<path d="M1659,810 L1671,810 L1666.5,816 L1666.5,822 L1663.5,822 L1663.5,816Z" fill="#e4e4e4" stroke="#8a8a8a" stroke-width="1"/><ellipse cx="1665" cy="810.5" rx="6" ry="1.6" fill="#f8f8f8" stroke="#8a8a8a" stroke-width="0.8"/>
<text x="1677" y="821" font-size="12" fill="#111" letter-spacing="-0.1">Data Flattening</text>
<path d="M1659,830 L1671,830 L1666.5,836 L1666.5,842 L1663.5,842 L1663.5,836Z" fill="#e4e4e4" stroke="#8a8a8a" stroke-width="1"/><ellipse cx="1665" cy="830.5" rx="6" ry="1.6" fill="#f8f8f8" stroke="#8a8a8a" stroke-width="0.8"/>
<text x="1677" y="841" font-size="12" fill="#111" letter-spacing="-0.1">Data Modification</text>
<path d="M1659,850 L1671,850 L1666.5,856 L1666.5,862 L1663.5,862 L1663.5,856Z" fill="#e4e4e4" stroke="#8a8a8a" stroke-width="1"/><ellipse cx="1665" cy="850.5" rx="6" ry="1.6" fill="#f8f8f8" stroke="#8a8a8a" stroke-width="0.8"/>
<text x="1677" y="861" font-size="12" fill="#111" letter-spacing="-0.1">Data Restore</text>
<path d="M1659,870 L1671,870 L1666.5,876 L1666.5,882 L1663.5,882 L1663.5,876Z" fill="#e4e4e4" stroke="#8a8a8a" stroke-width="1"/><ellipse cx="1665" cy="870.5" rx="6" ry="1.6" fill="#f8f8f8" stroke="#8a8a8a" stroke-width="0.8"/>
<text x="1677" y="881" font-size="12" fill="#111" letter-spacing="-0.1">Fourier Filter</text>
<path d="M1659,890 L1671,890 L1666.5,896 L1666.5,902 L1663.5,902 L1663.5,896Z" fill="#e4e4e4" stroke="#8a8a8a" stroke-width="1"/><ellipse cx="1665" cy="890.5" rx="6" ry="1.6" fill="#f8f8f8" stroke="#8a8a8a" stroke-width="0.8"/>
<text x="1677" y="901" font-size="12" fill="#111" letter-spacing="-0.1">Gaussian Regression Filter</text>
<path d="M1659,910 L1671,910 L1666.5,916 L1666.5,922 L1663.5,922 L1663.5,916Z" fill="#e4e4e4" stroke="#8a8a8a" stroke-width="1"/><ellipse cx="1665" cy="910.5" rx="6" ry="1.6" fill="#f8f8f8" stroke="#8a8a8a" stroke-width="0.8"/>
<text x="1677" y="921" font-size="12" fill="#111" letter-spacing="-0.1">Mask Data</text>
<path d="M1659,930 L1671,930 L1666.5,936 L1666.5,942 L1663.5,942 L1663.5,936Z" fill="#e4e4e4" stroke="#8a8a8a" stroke-width="1"/><ellipse cx="1665" cy="930.5" rx="6" ry="1.6" fill="#f8f8f8" stroke="#8a8a8a" stroke-width="0.8"/>
<text x="1677" y="941" font-size="12" fill="#111" letter-spacing="-0.1">Microform</text>
<path d="M1659,950 L1671,950 L1666.5,956 L1666.5,962 L1663.5,962 L1663.5,956Z" fill="#e4e4e4" stroke="#8a8a8a" stroke-width="1"/><ellipse cx="1665" cy="950.5" rx="6" ry="1.6" fill="#f8f8f8" stroke="#8a8a8a" stroke-width="0.8"/>
<text x="1677" y="961" font-size="12" fill="#111" letter-spacing="-0.1">Remove Modal Tilt</text>
<path d="M1659,970 L1671,970 L1666.5,976 L1666.5,982 L1663.5,982 L1663.5,976Z" fill="#e4e4e4" stroke="#8a8a8a" stroke-width="1"/><ellipse cx="1665" cy="970.5" rx="6" ry="1.6" fill="#f8f8f8" stroke="#8a8a8a" stroke-width="0.8"/>
<text x="1677" y="981" font-size="12" fill="#111" letter-spacing="-0.1">Remove Tilt</text>
<path d="M1659,990 L1671,990 L1666.5,996 L1666.5,1002 L1663.5,1002 L1663.5,996Z" fill="#e4e4e4" stroke="#8a8a8a" stroke-width="1"/><ellipse cx="1665" cy="990.5" rx="6" ry="1.6" fill="#f8f8f8" stroke="#8a8a8a" stroke-width="0.8"/>
<text x="1677" y="1001" font-size="12" fill="#111" letter-spacing="-0.1">Statistic Filter</text>
<path d="M1659,1010 L1671,1010 L1666.5,1016 L1666.5,1022 L1663.5,1022 L1663.5,1016Z" fill="#e4e4e4" stroke="#8a8a8a" stroke-width="1"/><ellipse cx="1665" cy="1010.5" rx="6" ry="1.6" fill="#f8f8f8" stroke="#8a8a8a" stroke-width="0.8"/>
<text x="1677" y="1021" font-size="12" fill="#111" letter-spacing="-0.1">Terms Removal (F-Operator)</text>
<path d="M1659,1030 L1671,1030 L1666.5,1036 L1666.5,1042 L1663.5,1042 L1663.5,1036Z" fill="#e4e4e4" stroke="#8a8a8a" stroke-width="1"/><ellipse cx="1665" cy="1030.5" rx="6" ry="1.6" fill="#f8f8f8" stroke="#8a8a8a" stroke-width="0.8"/>
<text x="1677" y="1041" font-size="12" fill="#111" letter-spacing="-0.1">Threshold</text>
<path d="M1659,1050 L1671,1050 L1666.5,1056 L1666.5,1062 L1663.5,1062 L1663.5,1056Z" fill="#e4e4e4" stroke="#8a8a8a" stroke-width="1"/><ellipse cx="1665" cy="1050.5" rx="6" ry="1.6" fill="#f8f8f8" stroke="#8a8a8a" stroke-width="0.8"/>
<text x="1677" y="1061" font-size="12" fill="#111" letter-spacing="-0.1">Trim Pixels</text>
<path d="M1652.5,1095 V1077 Q1652.5,1074.5 1655,1074.5 H1886 Q1888.5,1074.5 1888.5,1077 V1095" fill="url(#gCat)" stroke="#8c9cb4"/>
<text x="1659" y="1089" font-size="12" fill="#111" >Misc</text>
<path d="M1870,1088 L1882,1088 L1876,1082Z" fill="#000"/>
<path d="M1652.5,1095 V1118 Q1652.5,1121.5 1656,1121.5 H1885 Q1888.5,1121.5 1888.5,1118 V1095" fill="#fff" stroke="#8c8c8c"/>
<rect x="1659" y="1102" width="13" height="13" fill="#e8edf6" stroke="#6a80b0" stroke-width="0.8"/><rect x="1659" y="1102" width="13" height="3" fill="#5a7ad0"/><rect x="1662" y="1107" width="3" height="6" fill="#3a70d0"/><rect x="1666" y="1109" width="3" height="4" fill="#e04040"/>
<text x="1677" y="1114" font-size="12" fill="#111" >Data File Output</text>
<path d="M6.5,1129 V961.5 Q6.5,958.5 9.5,958.5 H1634.5 Q1637.5,958.5 1637.5,961.5 V1129" fill="#fff" stroke="#1a1a1a"/>
<rect x="7" y="959" width="1630" height="20" fill="url(#gHdr)" />
<line x1="7" y1="979.5" x2="1637" y2="979.5" stroke="#aebdd4" stroke-width="1" />
<text x="12" y="974" font-size="12" fill="#000" font-weight="bold" letter-spacing="-0.1">Active Gallery</text>
<line x1="6" y1="1128.5" x2="1638" y2="1128.5" stroke="#1a1a1a" stroke-width="1" />
<path d="M1608.5,965.5 L1614,971 L1619.5,965.5" fill="none" stroke="#000" stroke-width="2"/>
<path d="M1623,963 L1633,973 M1633,963 L1623,973" stroke="#c8181c" stroke-width="2"/>
<rect x="13.5" y="985.5" width="148" height="136" rx="3" fill="url(#gThumb1)" stroke="#333"/>
<defs><linearGradient id="gFill1" x1="0" y1="0" x2="0" y2="1"><stop offset="0" stop-color="#dce8f8"/><stop offset="1" stop-color="#f4f8fd"/></linearGradient></defs>
<polygon points="19.5,1087 26,1083 28.5,1070 31,1067 155,1010 155,1096.5 19.5,1096.5" fill="url(#gFill1)"/>
<polyline points="19.5,1087 26,1083 28.5,1070 31,1067 155,1010" fill="none" stroke="#1a2a3a" stroke-width="1.3"/>
<line x1="19.5" y1="1000" x2="19.5" y2="1097" stroke="#333" stroke-width="1" />
<line x1="19" y1="1096.5" x2="156" y2="1096.5" stroke="#333" stroke-width="1" />
<path d="M148,989 L158,999 M158,989 L148,999" stroke="#c8181c" stroke-width="2"/>
<text x="17" y="1114" font-size="12" fill="#222" letter-spacing="-0.6">SHS#1_2D.OPDx</text>
<rect x="171" y="986" width="147" height="135" rx="3" fill="url(#gThumb2)" stroke="#000" stroke-width="2"/>
<defs><linearGradient id="gHm2" x1="0" y1="0" x2="1" y2="0.12"><stop offset="0" stop-color="#e04010"/><stop offset="0.09" stop-color="#d06010"/><stop offset="0.18" stop-color="#b8b000"/><stop offset="0.3" stop-color="#80f070"/><stop offset="0.42" stop-color="#50c8c0"/><stop offset="0.52" stop-color="#50a0f0"/><stop offset="0.72" stop-color="#3068d8"/><stop offset="0.93" stop-color="#0c2290"/><stop offset="1" stop-color="#2850b8"/></linearGradient><linearGradient id="gHmL" x1="0" y1="0" x2="0" y2="1"><stop offset="0" stop-color="#f02000"/><stop offset="1" stop-color="#e06010"/></linearGradient></defs>
<rect x="177" y="1032" width="134" height="34" fill="url(#gHm2)" />
<rect x="177" y="1032" width="12" height="34" fill="url(#gHmL)" />
<path d="M189,1047 L194,1055 L189,1062Z" fill="#d07010"/>
<rect x="304" y="1032" width="7" height="34" fill="#2c58c0" />
<path d="M304,1049 L298,1055 L304,1062Z" fill="#2048b0"/>
<rect x="189" y="1062" width="115" height="4" fill="#ffffff" opacity='0.08'/>
<rect x="240" y="1032" width="12" height="14" fill="#60c8c0" opacity='0.8'/>
<path d="M303,990 L313,1000 M313,990 L303,1000" stroke="#c8181c" stroke-width="2"/>
<text x="175" y="1113" font-size="12" fill="#000" font-weight="bold" letter-spacing="-0.3">SHS#7_3D.OPDx</text>
<rect x="0" y="1135" width="1920" height="25" fill="url(#gStatus)" />
<line x1="0" y1="1135.5" x2="1920" y2="1135.5" stroke="#9aa4b2" stroke-width="1" />
<text x="4" y="1153" font-size="12" fill="#111" >Ready</text>
<line x1="930.5" y1="1138" x2="930.5" y2="1158" stroke="#8a8a8a" stroke-width="1" />
<text x="937" y="1153" font-size="12" fill="#111" >Recipe:</text>
<line x1="1865.5" y1="1138" x2="1865.5" y2="1158" stroke="#8a8a8a" stroke-width="1" />
<ellipse cx="1879" cy="1142" rx="5" ry="2" fill="#ddd" stroke="#888" stroke-width="0.8"/><path d="M1874,1142 V1153 Q1879,1156 1884,1153 V1142" fill="#ddd" stroke="#888" stroke-width="0.8"/><circle cx="1885" cy="1153" r="3.5" fill="#e03030"/>
<rect x="1896" y="1147" width="11" height="8" fill="#e8c030" stroke="#555" stroke-width="0.8"/><path d="M1904,1147 V1142 A3.5,3.5 0 0 1 1911,1142 V1144" fill="none" stroke="#666" stroke-width="1.5"/><path d="M1898,1151 H1905" stroke="#222" stroke-width="2" stroke-dasharray="2,1"/>
<rect x="0" y="1160" width="1920" height="40" fill="#03050b" />
<g fill="#fff"><path d="M16,1173.5 L23,1172.5 V1179.5 H16Z"/><path d="M24.5,1172.3 L32,1171.3 V1179.5 H24.5Z"/><path d="M16,1181 H23 V1188 L16,1187Z"/><path d="M24.5,1181 H32 V1189 L24.5,1188Z"/></g>
<ellipse cx="72" cy="1175" rx="7.5" ry="6.5" fill="#f0e8f0" stroke="#e05050" stroke-width="1.5"/><path d="M64,1177 Q64,1184 72,1183 L72,1178Z" fill="#a08080"/><path d="M69,1172 L78,1188 M75,1172 L70,1186" stroke="#555" stroke-width="1.2"/><circle cx="78" cy="1188" r="2.5" fill="none" stroke="#3aa0e0" stroke-width="1.3"/><circle cx="82" cy="1186" r="2.5" fill="none" stroke="#3aa0e0" stroke-width="1.3"/>
<path d="M111,1183 Q110,1172 122,1171 Q132,1172 130,1179 Q125,1180 124,1185 Q118,1190 111,1183Z" fill="#dde8f0"/><circle cx="116" cy="1180" r="1.8" fill="#e04040"/><circle cx="118" cy="1175" r="1.8" fill="#40a040"/><circle cx="124" cy="1174" r="1.8" fill="#4070e0"/><path d="M126,1188 L134,1172" stroke="#d89040" stroke-width="2.5"/>
<rect x="163" y="1169" width="17" height="22" rx="1.5" fill="#c8e0f0" stroke="#8ab0d0" stroke-width="0.8"/><rect x="165" y="1171" width="13" height="6" fill="#f0f6fc"/><g fill="#6890b0"><rect x="165" y="1179" width="3" height="2"/><rect x="169.5" y="1179" width="3" height="2"/><rect x="174" y="1179" width="3" height="2"/><rect x="165" y="1183" width="3" height="2"/><rect x="169.5" y="1183" width="3" height="2"/><rect x="165" y="1187" width="3" height="2"/><rect x="169.5" y="1187" width="3" height="2"/></g><rect x="175" y="1183" width="3" height="6" fill="#f0a040"/>
<rect x="197" y="1160" width="48" height="40" fill="#363638" />
<rect x="197" y="1198" width="48" height="2" fill="#7ab8ea" />
<path d="M210,1178 L222,1167 L233,1178 L221,1189Z" fill="#4a6ab8"/><circle cx="218" cy="1177" r="5.5" fill="#e07050"/><circle cx="226" cy="1178" r="4" fill="#90c040"/>
<path d="M259,1171 L266,1171 L268,1173 L281,1173 L281,1189 L259,1189Z" fill="#f6d77a"/><path d="M263,1189 V1181 H277 V1189 H273.5 V1185 H266.5 V1189Z" fill="#2aa8d8"/>
<rect x="250" y="1198" width="40" height="2" fill="#7ab8ea" />
<path d="M1755,1184 L1761,1178 L1767,1184" fill="none" stroke="#fff" stroke-width="1.5"/>
<rect x="1778" y="1172" width="12" height="10" fill="none" stroke="#fff" stroke-width="1.2"/><path d="M1781,1182 V1188 H1784" stroke="#fff" stroke-width="1.2" fill="none"/><circle cx="1788" cy="1186" r="4" fill="#e02828"/><path d="M1786,1184 L1790,1188 M1790,1184 L1786,1188" stroke="#fff" stroke-width="1"/>
<path d="M1801,1177 H1804 L1808,1173 V1189 L1804,1185 H1801Z" fill="none" stroke="#fff" stroke-width="1.2"/><path d="M1811,1178 L1816,1184 M1816,1178 L1811,1184" stroke="#fff" stroke-width="1.2"/>
<path d="M1826,1172 H1842 V1184 H1836 L1832,1188 V1184 H1826Z" fill="#fff"/><path d="M1829,1176 H1839 M1829,1179 H1839 M1829,1182 H1836" stroke="#000" stroke-width="1"/>
<text x="1880" y="1175" font-size="12" fill="#fff" text-anchor="middle" >7:31 AM</text>
<text x="1880" y="1192" font-size="12" fill="#fff" text-anchor="middle" >4/6/2018</text>
<line x1="1914.5" y1="1162" x2="1914.5" y2="1198" stroke="#555" stroke-width="1" />
</svg></body></html>
